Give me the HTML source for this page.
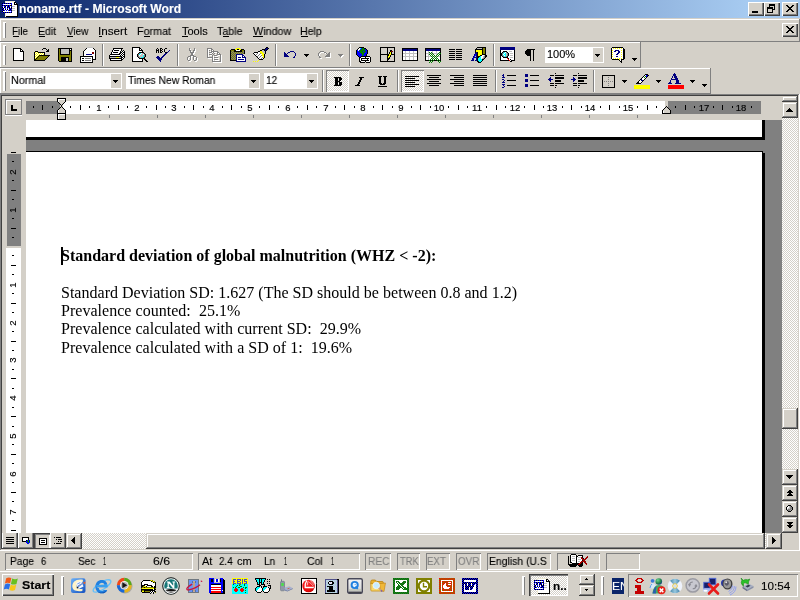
<!DOCTYPE html>
<html><head><meta charset="utf-8"><title>noname.rtf - Microsoft Word</title>
<style>
*{box-sizing:border-box;margin:0;padding:0}
html,body{width:800px;height:600px;overflow:hidden;background:#d4d0c8;font-family:"Liberation Sans",sans-serif;font-size:11px;color:#000}
.a{position:absolute}
.t{white-space:pre;line-height:14px;font-size:11px;will-change:transform;-webkit-text-stroke:0.12px currentColor}
.b{font-weight:bold}
.dz{background-image:conic-gradient(#fff 25%,#d4d0c8 0 50%,#fff 0 75%,#d4d0c8 0);background-size:2px 2px}
.doc{font-family:"Liberation Serif",serif;font-size:16px;line-height:18px;color:#000;-webkit-text-stroke:0}
.rn{font-size:9.5px;line-height:10px;width:20px;text-align:center;-webkit-text-stroke:0.15px #000}
.gt{color:#808080}
svg{overflow:visible}
</style></head>
<body>
<div class="a" style="left:0px;top:0px;width:800px;height:18px;background:linear-gradient(to right,#0a246a 0px,#a6caf0 746px);"></div>
<div class="a t b" style="left:19.0px;top:2px;color:#fff;font-size:12px;transform:scaleX(1.0101);transform-origin:0 0">noname.rtf - Microsoft Word</div>
<div class="a" style="left:748px;top:2px;width:16px;height:14px;background:#d4d0c8;box-shadow:inset 1px 1px 0 #fff,inset -1px -1px 0 #404040,inset -2px -2px 0 #808080"></div>
<div class="a" style="left:764px;top:2px;width:16px;height:14px;background:#d4d0c8;box-shadow:inset 1px 1px 0 #fff,inset -1px -1px 0 #404040,inset -2px -2px 0 #808080"></div>
<div class="a" style="left:782px;top:2px;width:16px;height:14px;background:#d4d0c8;box-shadow:inset 1px 1px 0 #fff,inset -1px -1px 0 #404040,inset -2px -2px 0 #808080"></div>
<div class="a" style="left:752px;top:11px;width:6px;height:2px;background:#000;"></div>
<div class="a" style="left:769px;top:4px;width:6px;height:2px;background:#000;"></div><div class="a" style="left:769px;top:6px;width:1px;height:2px;background:#000;"></div><div class="a" style="left:774px;top:6px;width:1px;height:4px;background:#000;"></div><div class="a" style="left:773px;top:9px;width:2px;height:1px;background:#000;"></div>
<div class="a" style="left:767px;top:7px;width:6px;height:2px;background:#000;"></div><div class="a" style="left:767px;top:9px;width:1px;height:4px;background:#000;"></div><div class="a" style="left:772px;top:9px;width:1px;height:4px;background:#000;"></div><div class="a" style="left:767px;top:12px;width:6px;height:1px;background:#000;"></div>
<svg class="a" style="left:786px;top:5px" width="8" height="7" viewBox="0 0 8 7" shape-rendering="crispEdges"><path fill="#000000" d="M0 0h2v1h-2zM6 0h2v1h-2zM1 1h2v1h-2zM5 1h2v1h-2zM2 2h4v1h-4zM3 3h2v1h-2zM2 4h4v1h-4zM1 5h2v1h-2zM5 5h2v1h-2zM0 6h2v1h-2zM6 6h2v1h-2z"/></svg>
<div class="a" style="left:0px;top:19px;width:799px;height:1px;background:#fff;"></div>
<div class="a" style="left:0px;top:19px;width:1px;height:22px;background:#fff;"></div>
<div class="a" style="left:799px;top:19px;width:1px;height:23px;background:#808080;"></div>
<div class="a" style="left:3px;top:22px;width:3px;height:16px;background:#d4d0c8;box-shadow:inset 2px 1px 0 #fff,inset -1px -1px 0 #808080"></div>
<div class="a t " style="left:12.0px;top:24px;;transform:scaleX(0.9019);transform-origin:0 0">File</div>
<div class="a t " style="left:38.0px;top:24px;;transform:scaleX(0.9553);transform-origin:0 0">Edit</div>
<div class="a t " style="left:67.0px;top:24px;;transform:scaleX(0.8987);transform-origin:0 0">View</div>
<div class="a t " style="left:98.0px;top:24px;;transform:scaleX(1.0611);transform-origin:0 0">Insert</div>
<div class="a t " style="left:137.0px;top:24px;;transform:scaleX(0.9764);transform-origin:0 0">Format</div>
<div class="a t " style="left:182.0px;top:24px;">Tools</div>
<div class="a t " style="left:217.0px;top:24px;;transform:scaleX(0.9691);transform-origin:0 0">Table</div>
<div class="a t " style="left:253.0px;top:24px;;transform:scaleX(0.9794);transform-origin:0 0">Window</div>
<div class="a t " style="left:300.0px;top:24px;;transform:scaleX(0.9617);transform-origin:0 0">Help</div>
<div class="a" style="left:13px;top:36px;width:6px;height:1px;background:#000;"></div>
<div class="a" style="left:39px;top:36px;width:6px;height:1px;background:#000;"></div>
<div class="a" style="left:67px;top:36px;width:6px;height:1px;background:#000;"></div>
<div class="a" style="left:99px;top:36px;width:3px;height:1px;background:#000;"></div>
<div class="a" style="left:144px;top:36px;width:6px;height:1px;background:#000;"></div>
<div class="a" style="left:182px;top:36px;width:6px;height:1px;background:#000;"></div>
<div class="a" style="left:223px;top:36px;width:6px;height:1px;background:#000;"></div>
<div class="a" style="left:253px;top:36px;width:10px;height:1px;background:#000;"></div>
<div class="a" style="left:301px;top:36px;width:7px;height:1px;background:#000;"></div>
<div class="a" style="left:782px;top:23px;width:16px;height:14px;background:#d4d0c8;box-shadow:inset 1px 1px 0 #fff,inset -1px -1px 0 #404040,inset -2px -2px 0 #808080"></div>
<svg class="a" style="left:786px;top:26px" width="8" height="7" viewBox="0 0 8 7" shape-rendering="crispEdges"><path fill="#000000" d="M0 0h2v1h-2zM6 0h2v1h-2zM1 1h2v1h-2zM5 1h2v1h-2zM2 2h4v1h-4zM3 3h2v1h-2zM2 4h4v1h-4zM1 5h2v1h-2zM5 5h2v1h-2zM0 6h2v1h-2zM6 6h2v1h-2z"/></svg>
<div class="a" style="left:0px;top:41px;width:800px;height:1px;background:#808080;"></div>
<div class="a" style="left:0px;top:42px;width:640px;height:1px;background:#fff;"></div>
<div class="a" style="left:0px;top:42px;width:1px;height:25px;background:#fff;"></div>
<div class="a" style="left:640px;top:42px;width:1px;height:26px;background:#808080;"></div>
<div class="a" style="left:0px;top:67px;width:641px;height:1px;background:#808080;"></div>
<div class="a" style="left:3px;top:45px;width:3px;height:20px;background:#d4d0c8;box-shadow:inset 2px 1px 0 #fff,inset -1px -1px 0 #808080"></div>
<div class="a" style="left:102px;top:44px;width:1px;height:22px;background:#808080;"></div>
<div class="a" style="left:103px;top:44px;width:1px;height:22px;background:#fff;"></div>
<div class="a" style="left:177px;top:44px;width:1px;height:22px;background:#808080;"></div>
<div class="a" style="left:178px;top:44px;width:1px;height:22px;background:#fff;"></div>
<div class="a" style="left:275px;top:44px;width:1px;height:22px;background:#808080;"></div>
<div class="a" style="left:276px;top:44px;width:1px;height:22px;background:#fff;"></div>
<div class="a" style="left:349px;top:44px;width:1px;height:22px;background:#808080;"></div>
<div class="a" style="left:350px;top:44px;width:1px;height:22px;background:#fff;"></div>
<div class="a" style="left:493px;top:44px;width:1px;height:22px;background:#808080;"></div>
<div class="a" style="left:494px;top:44px;width:1px;height:22px;background:#fff;"></div>
<div class="a" style="left:545px;top:47px;width:59px;height:16px;background:#fff;"></div>
<div class="a" style="left:593px;top:48px;width:10px;height:14px;background:#d4d0c8;"></div>
<div class="a" style="left:595px;top:54px;width:5px;height:1px;background:#000;"></div><div class="a" style="left:596px;top:55px;width:3px;height:1px;background:#000;"></div><div class="a" style="left:597px;top:56px;width:1px;height:1px;background:#000;"></div>
<div class="a t " style="left:547.0px;top:47px;;transform:scaleX(1.0011);transform-origin:0 0">100%</div>
<div class="a" style="left:632px;top:58px;width:5px;height:1px;background:#000;"></div><div class="a" style="left:633px;top:59px;width:3px;height:1px;background:#000;"></div><div class="a" style="left:634px;top:60px;width:1px;height:1px;background:#000;"></div>
<div class="a" style="left:304px;top:54px;width:5px;height:1px;background:#000;"></div><div class="a" style="left:305px;top:55px;width:3px;height:1px;background:#000;"></div><div class="a" style="left:306px;top:56px;width:1px;height:1px;background:#000;"></div>
<div class="a" style="left:339px;top:55px;width:5px;height:1px;background:#fff;"></div><div class="a" style="left:340px;top:56px;width:3px;height:1px;background:#fff;"></div><div class="a" style="left:341px;top:57px;width:1px;height:1px;background:#fff;"></div>
<div class="a" style="left:338px;top:54px;width:5px;height:1px;background:#808080;"></div><div class="a" style="left:339px;top:55px;width:3px;height:1px;background:#808080;"></div><div class="a" style="left:340px;top:56px;width:1px;height:1px;background:#808080;"></div>
<div class="a" style="left:0px;top:68px;width:710px;height:1px;background:#fff;"></div>
<div class="a" style="left:0px;top:68px;width:1px;height:25px;background:#fff;"></div>
<div class="a" style="left:710px;top:68px;width:1px;height:26px;background:#808080;"></div>
<div class="a" style="left:0px;top:93px;width:711px;height:1px;background:#808080;"></div>
<div class="a" style="left:3px;top:71px;width:3px;height:20px;background:#d4d0c8;box-shadow:inset 2px 1px 0 #fff,inset -1px -1px 0 #808080"></div>
<div class="a" style="left:10px;top:73px;width:112px;height:16px;background:#fff;"></div>
<div class="a" style="left:111px;top:74px;width:10px;height:14px;background:#d4d0c8;"></div>
<div class="a" style="left:113px;top:80px;width:5px;height:1px;background:#000;"></div><div class="a" style="left:114px;top:81px;width:3px;height:1px;background:#000;"></div><div class="a" style="left:115px;top:82px;width:1px;height:1px;background:#000;"></div>
<div class="a" style="left:126px;top:73px;width:134px;height:16px;background:#fff;"></div>
<div class="a" style="left:249px;top:74px;width:10px;height:14px;background:#d4d0c8;"></div>
<div class="a" style="left:251px;top:80px;width:5px;height:1px;background:#000;"></div><div class="a" style="left:252px;top:81px;width:3px;height:1px;background:#000;"></div><div class="a" style="left:253px;top:82px;width:1px;height:1px;background:#000;"></div>
<div class="a" style="left:264px;top:73px;width:54px;height:16px;background:#fff;"></div>
<div class="a" style="left:307px;top:74px;width:10px;height:14px;background:#d4d0c8;"></div>
<div class="a" style="left:309px;top:80px;width:5px;height:1px;background:#000;"></div><div class="a" style="left:310px;top:81px;width:3px;height:1px;background:#000;"></div><div class="a" style="left:311px;top:82px;width:1px;height:1px;background:#000;"></div>
<div class="a" style="left:322px;top:70px;width:1px;height:22px;background:#808080;"></div>
<div class="a" style="left:323px;top:70px;width:1px;height:22px;background:#fff;"></div>
<div class="a" style="left:397px;top:70px;width:1px;height:22px;background:#808080;"></div>
<div class="a" style="left:398px;top:70px;width:1px;height:22px;background:#fff;"></div>
<div class="a" style="left:495px;top:70px;width:1px;height:22px;background:#808080;"></div>
<div class="a" style="left:496px;top:70px;width:1px;height:22px;background:#fff;"></div>
<div class="a" style="left:593px;top:70px;width:1px;height:22px;background:#808080;"></div>
<div class="a" style="left:594px;top:70px;width:1px;height:22px;background:#fff;"></div>
<div class="a t " style="left:11.0px;top:73px;;transform:scaleX(0.9764);transform-origin:0 0">Normal</div>
<div class="a t " style="left:128.0px;top:73px;;transform:scaleX(0.938);transform-origin:0 0">Times New Roman</div>
<div class="a t " style="left:266.0px;top:73px;;transform:scaleX(0.9266);transform-origin:0 0">12</div>
<div class="a dz" style="left:326px;top:70px;width:23px;height:22px;box-shadow:inset 1px 1px 0 #808080,inset -1px -1px 0 #fff"></div>
<div class="a dz" style="left:401px;top:70px;width:23px;height:22px;box-shadow:inset 1px 1px 0 #808080,inset -1px -1px 0 #fff"></div>
<div class="a" style="left:622px;top:80px;width:5px;height:1px;background:#000;"></div><div class="a" style="left:623px;top:81px;width:3px;height:1px;background:#000;"></div><div class="a" style="left:624px;top:82px;width:1px;height:1px;background:#000;"></div>
<div class="a" style="left:656px;top:80px;width:5px;height:1px;background:#000;"></div><div class="a" style="left:657px;top:81px;width:3px;height:1px;background:#000;"></div><div class="a" style="left:658px;top:82px;width:1px;height:1px;background:#000;"></div>
<div class="a" style="left:690px;top:80px;width:5px;height:1px;background:#000;"></div><div class="a" style="left:691px;top:81px;width:3px;height:1px;background:#000;"></div><div class="a" style="left:692px;top:82px;width:1px;height:1px;background:#000;"></div>
<div class="a" style="left:702px;top:84px;width:5px;height:1px;background:#000;"></div><div class="a" style="left:703px;top:85px;width:3px;height:1px;background:#000;"></div><div class="a" style="left:704px;top:86px;width:1px;height:1px;background:#000;"></div>
<div class="a" style="left:634px;top:85px;width:16px;height:4px;background:#ffff00;"></div>
<div class="a" style="left:668px;top:85px;width:16px;height:4px;background:#ff0000;"></div>
<div class="a" style="left:0px;top:94px;width:800px;height:1px;background:#808080;"></div>
<div class="a" style="left:1px;top:95px;width:798px;height:1px;background:#404040;"></div>
<div class="a" style="left:0px;top:94px;width:1px;height:456px;background:#808080;"></div>
<div class="a" style="left:1px;top:95px;width:1px;height:454px;background:#404040;"></div>
<div class="a" style="left:798px;top:95px;width:1px;height:455px;background:#d4d0c8;"></div>
<div class="a" style="left:799px;top:94px;width:1px;height:457px;background:#fff;"></div>
<div class="a" style="left:1px;top:549px;width:798px;height:1px;background:#d4d0c8;"></div>
<div class="a" style="left:0px;top:550px;width:800px;height:1px;background:#fff;"></div>
<div class="a" style="left:5px;top:99px;width:17px;height:16px;background:#d4d0c8;box-shadow:inset 0 0 0 1px #808080,inset 2px 2px 0 0 #fff"></div>
<div class="a" style="left:5px;top:115px;width:17px;height:1px;background:#fff;"></div>
<div class="a" style="left:11px;top:105px;width:2px;height:6px;background:#000;"></div><div class="a" style="left:11px;top:109px;width:6px;height:2px;background:#000;"></div>
<div class="a" style="left:26px;top:101px;width:34px;height:13px;background:#808080;"></div>
<div class="a" style="left:63px;top:101px;width:602px;height:13px;background:#fff;"></div>
<div class="a" style="left:668px;top:101px;width:93px;height:13px;background:#808080;"></div>
<div class="a" style="left:33px;top:106px;width:1px;height:2px;background:#000;"></div>
<div class="a" style="left:42px;top:105px;width:1px;height:5px;background:#000;"></div>
<div class="a" style="left:52px;top:106px;width:1px;height:2px;background:#000;"></div>
<div class="a" style="left:70px;top:106px;width:1px;height:2px;background:#000;"></div>
<div class="a" style="left:80px;top:105px;width:1px;height:5px;background:#000;"></div>
<div class="a" style="left:89px;top:106px;width:1px;height:2px;background:#000;"></div>
<div class="a t rn" style="left:89px;top:103px;">1</div>
<div class="a" style="left:108px;top:106px;width:1px;height:2px;background:#000;"></div>
<div class="a" style="left:118px;top:105px;width:1px;height:5px;background:#000;"></div>
<div class="a" style="left:127px;top:106px;width:1px;height:2px;background:#000;"></div>
<div class="a t rn" style="left:127px;top:103px;">2</div>
<div class="a" style="left:146px;top:106px;width:1px;height:2px;background:#000;"></div>
<div class="a" style="left:156px;top:105px;width:1px;height:5px;background:#000;"></div>
<div class="a" style="left:165px;top:106px;width:1px;height:2px;background:#000;"></div>
<div class="a t rn" style="left:164px;top:103px;">3</div>
<div class="a" style="left:184px;top:106px;width:1px;height:2px;background:#000;"></div>
<div class="a" style="left:193px;top:105px;width:1px;height:5px;background:#000;"></div>
<div class="a" style="left:203px;top:106px;width:1px;height:2px;background:#000;"></div>
<div class="a t rn" style="left:202px;top:103px;">4</div>
<div class="a" style="left:222px;top:106px;width:1px;height:2px;background:#000;"></div>
<div class="a" style="left:231px;top:105px;width:1px;height:5px;background:#000;"></div>
<div class="a" style="left:241px;top:106px;width:1px;height:2px;background:#000;"></div>
<div class="a t rn" style="left:240px;top:103px;">5</div>
<div class="a" style="left:259px;top:106px;width:1px;height:2px;background:#000;"></div>
<div class="a" style="left:269px;top:105px;width:1px;height:5px;background:#000;"></div>
<div class="a" style="left:278px;top:106px;width:1px;height:2px;background:#000;"></div>
<div class="a t rn" style="left:278px;top:103px;">6</div>
<div class="a" style="left:297px;top:106px;width:1px;height:2px;background:#000;"></div>
<div class="a" style="left:307px;top:105px;width:1px;height:5px;background:#000;"></div>
<div class="a" style="left:316px;top:106px;width:1px;height:2px;background:#000;"></div>
<div class="a t rn" style="left:316px;top:103px;">7</div>
<div class="a" style="left:335px;top:106px;width:1px;height:2px;background:#000;"></div>
<div class="a" style="left:344px;top:105px;width:1px;height:5px;background:#000;"></div>
<div class="a" style="left:354px;top:106px;width:1px;height:2px;background:#000;"></div>
<div class="a t rn" style="left:353px;top:103px;">8</div>
<div class="a" style="left:373px;top:106px;width:1px;height:2px;background:#000;"></div>
<div class="a" style="left:382px;top:105px;width:1px;height:5px;background:#000;"></div>
<div class="a" style="left:392px;top:106px;width:1px;height:2px;background:#000;"></div>
<div class="a t rn" style="left:391px;top:103px;">9</div>
<div class="a" style="left:411px;top:106px;width:1px;height:2px;background:#000;"></div>
<div class="a" style="left:420px;top:105px;width:1px;height:5px;background:#000;"></div>
<div class="a" style="left:430px;top:106px;width:1px;height:2px;background:#000;"></div>
<div class="a t rn" style="left:429px;top:103px;">10</div>
<div class="a" style="left:448px;top:106px;width:1px;height:2px;background:#000;"></div>
<div class="a" style="left:458px;top:105px;width:1px;height:5px;background:#000;"></div>
<div class="a" style="left:467px;top:106px;width:1px;height:2px;background:#000;"></div>
<div class="a t rn" style="left:467px;top:103px;">11</div>
<div class="a" style="left:486px;top:106px;width:1px;height:2px;background:#000;"></div>
<div class="a" style="left:496px;top:105px;width:1px;height:5px;background:#000;"></div>
<div class="a" style="left:505px;top:106px;width:1px;height:2px;background:#000;"></div>
<div class="a t rn" style="left:505px;top:103px;">12</div>
<div class="a" style="left:524px;top:106px;width:1px;height:2px;background:#000;"></div>
<div class="a" style="left:534px;top:105px;width:1px;height:5px;background:#000;"></div>
<div class="a" style="left:543px;top:106px;width:1px;height:2px;background:#000;"></div>
<div class="a t rn" style="left:542px;top:103px;">13</div>
<div class="a" style="left:562px;top:106px;width:1px;height:2px;background:#000;"></div>
<div class="a" style="left:571px;top:105px;width:1px;height:5px;background:#000;"></div>
<div class="a" style="left:581px;top:106px;width:1px;height:2px;background:#000;"></div>
<div class="a t rn" style="left:580px;top:103px;">14</div>
<div class="a" style="left:600px;top:106px;width:1px;height:2px;background:#000;"></div>
<div class="a" style="left:609px;top:105px;width:1px;height:5px;background:#000;"></div>
<div class="a" style="left:619px;top:106px;width:1px;height:2px;background:#000;"></div>
<div class="a t rn" style="left:618px;top:103px;">15</div>
<div class="a" style="left:637px;top:106px;width:1px;height:2px;background:#000;"></div>
<div class="a" style="left:647px;top:105px;width:1px;height:5px;background:#000;"></div>
<div class="a" style="left:656px;top:106px;width:1px;height:2px;background:#000;"></div>
<div class="a" style="left:675px;top:106px;width:1px;height:2px;background:#000;"></div>
<div class="a" style="left:685px;top:105px;width:1px;height:5px;background:#000;"></div>
<div class="a" style="left:694px;top:106px;width:1px;height:2px;background:#000;"></div>
<div class="a t rn" style="left:694px;top:103px;">17</div>
<div class="a" style="left:713px;top:106px;width:1px;height:2px;background:#000;"></div>
<div class="a" style="left:722px;top:105px;width:1px;height:5px;background:#000;"></div>
<div class="a" style="left:732px;top:106px;width:1px;height:2px;background:#000;"></div>
<div class="a t rn" style="left:731px;top:103px;">18</div>
<div class="a" style="left:751px;top:106px;width:1px;height:2px;background:#000;"></div>
<div class="a" style="left:109px;top:115px;width:1px;height:3px;background:#808080;"></div>
<div class="a" style="left:157px;top:115px;width:1px;height:3px;background:#808080;"></div>
<div class="a" style="left:205px;top:115px;width:1px;height:3px;background:#808080;"></div>
<div class="a" style="left:253px;top:115px;width:1px;height:3px;background:#808080;"></div>
<div class="a" style="left:301px;top:115px;width:1px;height:3px;background:#808080;"></div>
<div class="a" style="left:349px;top:115px;width:1px;height:3px;background:#808080;"></div>
<div class="a" style="left:397px;top:115px;width:1px;height:3px;background:#808080;"></div>
<div class="a" style="left:445px;top:115px;width:1px;height:3px;background:#808080;"></div>
<div class="a" style="left:493px;top:115px;width:1px;height:3px;background:#808080;"></div>
<div class="a" style="left:541px;top:115px;width:1px;height:3px;background:#808080;"></div>
<div class="a" style="left:589px;top:115px;width:1px;height:3px;background:#808080;"></div>
<div class="a" style="left:637px;top:115px;width:1px;height:3px;background:#808080;"></div>
<svg class="a" style="left:57px;top:98px" width="9" height="22" viewBox="0 0 9 22" shape-rendering="crispEdges"><path d="M0.5 0.5H8.5V3.5L4.5 7.5L0.5 3.5Z" fill="#d4d0c8" stroke="#000"/><path d="M4.5 8.5L8.5 12.5V15.5H0.5V12.5Z" fill="#d4d0c8" stroke="#000"/><path d="M0.5 15.5H8.5V21.5H0.5Z" fill="#d4d0c8" stroke="#000"/><path d="M1 1h7v1h-6v2h-1zM1 16h7v1h-6v4h-1zM1 12h1v3h-1z" fill="#fff"/></svg>
<svg class="a" style="left:662px;top:106px" width="9" height="8" viewBox="0 0 9 8" shape-rendering="crispEdges"><path d="M4.5 0.5L8.5 4.5V7.5H0.5V4.5Z" fill="#d4d0c8" stroke="#000"/><path d="M1 5h1v2h-1z" fill="#fff"/></svg>
<div class="a" style="left:7px;top:154px;width:14px;height:92px;background:#808080;"></div>
<div class="a" style="left:6px;top:248px;width:15px;height:285px;background:#fff;"></div>
<div class="a" style="left:11px;top:152px;width:5px;height:1px;background:#000;"></div>
<div class="a" style="left:12px;top:161px;width:2px;height:1px;background:#000;"></div>
<div class="a t rn" style="left:3px;top:167px;transform:rotate(-90deg);transform-origin:10px 5px">2</div>
<div class="a" style="left:12px;top:180px;width:2px;height:1px;background:#000;"></div>
<div class="a" style="left:11px;top:190px;width:5px;height:1px;background:#000;"></div>
<div class="a" style="left:12px;top:199px;width:2px;height:1px;background:#000;"></div>
<div class="a t rn" style="left:3px;top:205px;transform:rotate(-90deg);transform-origin:10px 5px">1</div>
<div class="a" style="left:12px;top:218px;width:2px;height:1px;background:#000;"></div>
<div class="a" style="left:11px;top:228px;width:5px;height:1px;background:#000;"></div>
<div class="a" style="left:12px;top:237px;width:2px;height:1px;background:#000;"></div>
<div class="a" style="left:12px;top:255px;width:2px;height:1px;background:#000;"></div>
<div class="a" style="left:11px;top:265px;width:5px;height:1px;background:#000;"></div>
<div class="a" style="left:12px;top:274px;width:2px;height:1px;background:#000;"></div>
<div class="a t rn" style="left:3px;top:280px;transform:rotate(-90deg);transform-origin:10px 5px">1</div>
<div class="a" style="left:12px;top:293px;width:2px;height:1px;background:#000;"></div>
<div class="a" style="left:11px;top:303px;width:5px;height:1px;background:#000;"></div>
<div class="a" style="left:12px;top:312px;width:2px;height:1px;background:#000;"></div>
<div class="a t rn" style="left:3px;top:318px;transform:rotate(-90deg);transform-origin:10px 5px">2</div>
<div class="a" style="left:12px;top:331px;width:2px;height:1px;background:#000;"></div>
<div class="a" style="left:11px;top:341px;width:5px;height:1px;background:#000;"></div>
<div class="a" style="left:12px;top:350px;width:2px;height:1px;background:#000;"></div>
<div class="a t rn" style="left:3px;top:355px;transform:rotate(-90deg);transform-origin:10px 5px">3</div>
<div class="a" style="left:12px;top:369px;width:2px;height:1px;background:#000;"></div>
<div class="a" style="left:11px;top:378px;width:5px;height:1px;background:#000;"></div>
<div class="a" style="left:12px;top:388px;width:2px;height:1px;background:#000;"></div>
<div class="a t rn" style="left:3px;top:393px;transform:rotate(-90deg);transform-origin:10px 5px">4</div>
<div class="a" style="left:12px;top:407px;width:2px;height:1px;background:#000;"></div>
<div class="a" style="left:11px;top:416px;width:5px;height:1px;background:#000;"></div>
<div class="a" style="left:12px;top:426px;width:2px;height:1px;background:#000;"></div>
<div class="a t rn" style="left:3px;top:431px;transform:rotate(-90deg);transform-origin:10px 5px">5</div>
<div class="a" style="left:12px;top:444px;width:2px;height:1px;background:#000;"></div>
<div class="a" style="left:11px;top:454px;width:5px;height:1px;background:#000;"></div>
<div class="a" style="left:12px;top:463px;width:2px;height:1px;background:#000;"></div>
<div class="a t rn" style="left:3px;top:469px;transform:rotate(-90deg);transform-origin:10px 5px">6</div>
<div class="a" style="left:12px;top:482px;width:2px;height:1px;background:#000;"></div>
<div class="a" style="left:11px;top:492px;width:5px;height:1px;background:#000;"></div>
<div class="a" style="left:12px;top:501px;width:2px;height:1px;background:#000;"></div>
<div class="a t rn" style="left:3px;top:507px;transform:rotate(-90deg);transform-origin:10px 5px">7</div>
<div class="a" style="left:12px;top:520px;width:2px;height:1px;background:#000;"></div>
<div class="a" style="left:11px;top:530px;width:5px;height:1px;background:#000;"></div>
<div class="a" style="left:26px;top:120px;width:756px;height:413px;background:#808080;"></div>
<div class="a" style="left:26px;top:120px;width:736px;height:17px;background:#fff;"></div>
<div class="a" style="left:762px;top:120px;width:3px;height:20px;background:#000;"></div>
<div class="a" style="left:26px;top:137px;width:739px;height:3px;background:#000;"></div>
<div class="a" style="left:26px;top:151px;width:737px;height:1px;background:#000;"></div>
<div class="a" style="left:762px;top:153px;width:3px;height:380px;background:#000;"></div>
<div class="a" style="left:762px;top:152px;width:1px;height:1px;background:#000;"></div>
<div class="a" style="left:26px;top:152px;width:736px;height:381px;background:#fff;"></div>
<div class="a" style="left:61px;top:247px;width:2px;height:18px;background:#000;"></div>
<div class="a t doc b" style="left:61px;top:247px;letter-spacing:0.008px">Standard deviation of global malnutrition (WHZ &lt; -2):</div>
<div class="a t doc" style="left:61px;top:284px;letter-spacing:0.015px">Standard Deviation SD: 1.627 (The SD should be between 0.8 and 1.2)</div>
<div class="a t doc" style="left:61px;top:302px;letter-spacing:0.03px">Prevalence counted:  25.1%</div>
<div class="a t doc" style="left:61px;top:320px;letter-spacing:0.025px">Prevalence calculated with current SD:  29.9%</div>
<div class="a t doc" style="left:61px;top:339px;letter-spacing:0.025px">Prevalence calculated with a SD of 1:  19.6%</div>
<div class="a dz" style="left:782px;top:96px;width:16px;height:437px"></div>
<div class="a" style="left:782px;top:96px;width:16px;height:6px;background:#d4d0c8;box-shadow:inset -1px -1px 0 #404040,inset 1px 1px 0 #d4d0c8,inset -2px -2px 0 #808080,inset 2px 2px 0 #fff"></div>
<div class="a" style="left:782px;top:102px;width:16px;height:16px;background:#d4d0c8;box-shadow:inset -1px -1px 0 #404040,inset 1px 1px 0 #d4d0c8,inset -2px -2px 0 #808080,inset 2px 2px 0 #fff"></div>
<div class="a" style="left:789px;top:108px;width:1px;height:1px;background:#000;"></div><div class="a" style="left:788px;top:109px;width:3px;height:1px;background:#000;"></div><div class="a" style="left:787px;top:110px;width:5px;height:1px;background:#000;"></div><div class="a" style="left:786px;top:111px;width:7px;height:1px;background:#000;"></div>
<div class="a" style="left:782px;top:408px;width:16px;height:21px;background:#d4d0c8;box-shadow:inset -1px -1px 0 #404040,inset 1px 1px 0 #d4d0c8,inset -2px -2px 0 #808080,inset 2px 2px 0 #fff"></div>
<div class="a" style="left:782px;top:469px;width:16px;height:16px;background:#d4d0c8;box-shadow:inset -1px -1px 0 #404040,inset 1px 1px 0 #d4d0c8,inset -2px -2px 0 #808080,inset 2px 2px 0 #fff"></div>
<div class="a" style="left:782px;top:485px;width:16px;height:16px;background:#d4d0c8;box-shadow:inset -1px -1px 0 #404040,inset 1px 1px 0 #d4d0c8,inset -2px -2px 0 #808080,inset 2px 2px 0 #fff"></div>
<div class="a" style="left:782px;top:501px;width:16px;height:16px;background:#d4d0c8;box-shadow:inset -1px -1px 0 #404040,inset 1px 1px 0 #d4d0c8,inset -2px -2px 0 #808080,inset 2px 2px 0 #fff"></div>
<div class="a" style="left:782px;top:517px;width:16px;height:16px;background:#d4d0c8;box-shadow:inset -1px -1px 0 #404040,inset 1px 1px 0 #d4d0c8,inset -2px -2px 0 #808080,inset 2px 2px 0 #fff"></div>
<div class="a" style="left:786px;top:475px;width:7px;height:1px;background:#000;"></div><div class="a" style="left:787px;top:476px;width:5px;height:1px;background:#000;"></div><div class="a" style="left:788px;top:477px;width:3px;height:1px;background:#000;"></div><div class="a" style="left:789px;top:478px;width:1px;height:1px;background:#000;"></div>
<div class="a dz" style="left:66px;top:533px;width:716px;height:16px"></div>
<div class="a" style="left:2px;top:533px;width:64px;height:16px;background:#d4d0c8;"></div>
<div class="a" style="left:782px;top:533px;width:16px;height:16px;background:#d4d0c8;"></div>
<div class="a" style="left:66px;top:533px;width:16px;height:16px;background:#d4d0c8;box-shadow:inset -1px -1px 0 #404040,inset 1px 1px 0 #d4d0c8,inset -2px -2px 0 #808080,inset 2px 2px 0 #fff"></div>
<div class="a" style="left:74px;top:537px;width:1px;height:7px;background:#000;"></div><div class="a" style="left:73px;top:538px;width:1px;height:5px;background:#000;"></div><div class="a" style="left:72px;top:539px;width:1px;height:3px;background:#000;"></div><div class="a" style="left:71px;top:540px;width:1px;height:1px;background:#000;"></div>
<div class="a" style="left:766px;top:533px;width:16px;height:16px;background:#d4d0c8;box-shadow:inset -1px -1px 0 #404040,inset 1px 1px 0 #d4d0c8,inset -2px -2px 0 #808080,inset 2px 2px 0 #fff"></div>
<div class="a" style="left:772px;top:537px;width:1px;height:7px;background:#000;"></div><div class="a" style="left:773px;top:538px;width:1px;height:5px;background:#000;"></div><div class="a" style="left:774px;top:539px;width:1px;height:3px;background:#000;"></div><div class="a" style="left:775px;top:540px;width:1px;height:1px;background:#000;"></div>
<div class="a" style="left:146px;top:533px;width:619px;height:16px;background:#d4d0c8;box-shadow:inset -1px -1px 0 #404040,inset 1px 1px 0 #d4d0c8,inset -2px -2px 0 #808080,inset 2px 2px 0 #fff"></div>
<div class="a" style="left:2px;top:533px;width:16px;height:16px;background:#d4d0c8;box-shadow:inset 1px 0 0 #fff,inset -1px -1px 0 #404040,inset -2px -2px 0 #808080"></div>
<div class="a" style="left:18px;top:533px;width:16px;height:16px;background:#d4d0c8;box-shadow:inset 1px 0 0 #fff,inset -1px -1px 0 #404040,inset -2px -2px 0 #808080"></div>
<div class="a" style="left:34px;top:533px;width:16px;height:16px;background:#d4d0c8;box-shadow:inset 1px 1px 0 #404040,inset 2px 2px 0 #808080,inset -1px -1px 0 #fff"></div>
<div class="a" style="left:50px;top:533px;width:16px;height:16px;background:#d4d0c8;box-shadow:inset 1px 0 0 #fff,inset -1px -1px 0 #404040,inset -2px -2px 0 #808080"></div>
<div class="a" style="left:2px;top:548px;width:64px;height:1px;background:#404040;"></div>
<div class="a" style="left:6px;top:537px;width:8px;height:1px;background:#000;"></div>
<div class="a" style="left:6px;top:539px;width:8px;height:1px;background:#000;"></div>
<div class="a" style="left:6px;top:541px;width:8px;height:1px;background:#000;"></div>
<div class="a" style="left:6px;top:543px;width:8px;height:1px;background:#000;"></div>
<svg class="a" style="left:22px;top:537px" width="8" height="7" viewBox="0 0 8 7" shape-rendering="crispEdges"><path fill="#000000" d="M0 0h7v1h-7zM0 1h1v1h-1zM6 1h1v1h-1zM0 2h1v1h-1zM6 2h1v1h-1zM0 3h1v1h-1zM4 3h1v1h-1zM0 4h4v1h-4z"/><path fill="#ffffff" d="M1 1h5v1h-5zM1 2h5v1h-5zM1 3h3v1h-3z"/><path fill="#0000ff" d="M5 3h1v1h-1zM7 3h1v1h-1zM4 4h1v1h-1zM7 4h1v1h-1zM4 5h2v1h-2zM7 5h1v1h-1zM5 6h2v1h-2z"/><path fill="#008000" d="M6 3h1v1h-1zM5 4h2v1h-2zM6 5h1v1h-1z"/></svg>
<svg class="a" style="left:39px;top:538px" width="8" height="7" viewBox="0 0 8 7" shape-rendering="crispEdges"><path fill="#000000" d="M0 0h8v1h-8zM0 1h1v1h-1zM7 1h1v1h-1zM0 2h1v1h-1zM2 2h4v1h-4zM7 2h1v1h-1zM0 3h1v1h-1zM7 3h1v1h-1zM0 4h1v1h-1zM2 4h4v1h-4zM7 4h1v1h-1zM0 5h1v1h-1zM7 5h1v1h-1zM0 6h8v1h-8z"/><path fill="#ffffff" d="M1 1h6v1h-6zM1 2h1v1h-1zM6 2h1v1h-1zM1 3h6v1h-6zM1 4h1v1h-1zM6 4h1v1h-1zM1 5h6v1h-6z"/></svg>
<svg class="a" style="left:54px;top:537px" width="8" height="7" viewBox="0 0 8 7" shape-rendering="crispEdges"><path fill="#000000" d="M0 0h1v1h-1zM2 0h5v1h-5zM2 2h1v1h-1zM4 2h4v1h-4zM4 4h1v1h-1zM6 4h2v1h-2zM0 6h1v1h-1zM2 6h5v1h-5z"/></svg>
<svg class="a" style="left:787px;top:490px" width="6" height="6" viewBox="0 0 6 6" shape-rendering="crispEdges"><path fill="#000000" d="M2 0h2v1h-2zM1 1h4v1h-4zM0 2h6v1h-6zM2 3h2v1h-2zM1 4h4v1h-4zM0 5h6v1h-6z"/></svg>
<svg class="a" style="left:787px;top:522px" width="6" height="6" viewBox="0 0 6 6" shape-rendering="crispEdges"><path fill="#000000" d="M0 0h6v1h-6zM1 1h4v1h-4zM2 2h2v1h-2zM0 3h6v1h-6zM1 4h4v1h-4zM2 5h2v1h-2z"/></svg>
<svg class="a" style="left:786px;top:505px" width="7" height="7" viewBox="0 0 7 7" shape-rendering="crispEdges"><path fill="#000000" d="M2 0h3v1h-3zM1 1h1v1h-1zM5 1h1v1h-1zM0 2h1v1h-1zM6 2h1v1h-1zM0 3h1v1h-1zM6 3h1v1h-1zM0 4h1v1h-1zM6 4h1v1h-1zM1 5h1v1h-1zM5 5h1v1h-1zM2 6h3v1h-3z"/><path fill="#ffffff" d="M2 1h1v1h-1zM1 2h2v1h-2zM1 3h1v1h-1z"/><path fill="#c0c0c0" d="M3 1h1v1h-1zM3 2h1v1h-1zM2 3h2v1h-2zM1 4h1v1h-1z"/><path fill="#808080" d="M4 1h1v1h-1zM4 2h2v1h-2zM4 3h2v1h-2zM2 4h3v1h-3zM2 5h2v1h-2z"/><path fill="#a0a0a0" d="M5 4h1v1h-1zM4 5h1v1h-1z"/></svg>
<div class="a" style="left:5px;top:553px;width:188px;height:17px;background:#d4d0c8;box-shadow:inset 1px 1px 0 #808080,inset -1px -1px 0 #fff"></div>
<div class="a" style="left:198px;top:553px;width:162px;height:17px;background:#d4d0c8;box-shadow:inset 1px 1px 0 #808080,inset -1px -1px 0 #fff"></div>
<div class="a" style="left:365px;top:553px;width:26px;height:17px;background:#d4d0c8;box-shadow:inset 1px 1px 0 #808080,inset -1px -1px 0 #fff"></div>
<div class="a" style="left:397px;top:553px;width:23px;height:17px;background:#d4d0c8;box-shadow:inset 1px 1px 0 #808080,inset -1px -1px 0 #fff"></div>
<div class="a" style="left:426px;top:553px;width:24px;height:17px;background:#d4d0c8;box-shadow:inset 1px 1px 0 #808080,inset -1px -1px 0 #fff"></div>
<div class="a" style="left:456px;top:553px;width:25px;height:17px;background:#d4d0c8;box-shadow:inset 1px 1px 0 #808080,inset -1px -1px 0 #fff"></div>
<div class="a" style="left:487px;top:553px;width:64px;height:17px;background:#d4d0c8;box-shadow:inset 1px 1px 0 #808080,inset -1px -1px 0 #fff"></div>
<div class="a" style="left:557px;top:553px;width:43px;height:17px;background:#d4d0c8;box-shadow:inset 1px 1px 0 #808080,inset -1px -1px 0 #fff"></div>
<div class="a" style="left:606px;top:553px;width:34px;height:17px;background:#d4d0c8;box-shadow:inset 1px 1px 0 #808080,inset -1px -1px 0 #fff"></div>
<div class="a t " style="left:10.0px;top:554px;;transform:scaleX(0.9341);transform-origin:0 0">Page</div>
<div class="a t " style="left:41.0px;top:554px;;transform:scaleX(0.8643);transform-origin:0 0">6</div>
<div class="a t " style="left:78.0px;top:554px;;transform:scaleX(0.9129);transform-origin:0 0">Sec</div>
<div class="a t " style="left:103.0px;top:554px;;transform:scaleX(0.5014);transform-origin:0 0">1</div>
<div class="a t " style="left:153.0px;top:554px;;transform:scaleX(1.1162);transform-origin:0 0">6/6</div>
<div class="a t " style="left:202.0px;top:554px;">At</div>
<div class="a t " style="left:219.0px;top:554px;;transform:scaleX(0.8955);transform-origin:0 0">2.4</div>
<div class="a t " style="left:237.0px;top:554px;;transform:scaleX(1.0041);transform-origin:0 0">cm</div>
<div class="a t " style="left:264.0px;top:554px;;transform:scaleX(0.9266);transform-origin:0 0">Ln</div>
<div class="a t " style="left:284.0px;top:554px;;transform:scaleX(0.5014);transform-origin:0 0">1</div>
<div class="a t " style="left:307.0px;top:554px;;transform:scaleX(0.9502);transform-origin:0 0">Col</div>
<div class="a t " style="left:331.0px;top:554px;;transform:scaleX(0.5014);transform-origin:0 0">1</div>
<div class="a t gt" style="left:368.0px;top:554px;;transform:scaleX(0.9249);transform-origin:0 0">REC</div>
<div class="a t gt" style="left:400.0px;top:554px;;transform:scaleX(0.843);transform-origin:0 0">TRK</div>
<div class="a t gt" style="left:427.0px;top:554px;;transform:scaleX(0.8784);transform-origin:0 0">EXT</div>
<div class="a t gt" style="left:458.0px;top:554px;;transform:scaleX(0.8958);transform-origin:0 0">OVR</div>
<div class="a t " style="left:489.0px;top:554px;;transform:scaleX(0.9454);transform-origin:0 0">English (U.S</div>
<div class="a" style="left:0px;top:571px;width:800px;height:1px;background:#fff;"></div>
<div class="a" style="left:2px;top:574px;width:52px;height:22px;background:#d4d0c8;box-shadow:inset 1px 1px 0 #fff,inset -1px -1px 0 #404040,inset -2px -2px 0 #808080"></div>
<div class="a t b" style="left:22.0px;top:578px;;transform:scaleX(1.1284);transform-origin:0 0">Start</div>
<div class="a" style="left:61px;top:576px;width:3px;height:19px;background:#d4d0c8;box-shadow:inset 2px 1px 0 #fff,inset -1px -1px 0 #808080"></div>
<div class="a" style="left:522px;top:576px;width:3px;height:19px;background:#d4d0c8;box-shadow:inset 2px 1px 0 #fff,inset -1px -1px 0 #808080"></div>
<div class="a" style="left:601px;top:576px;width:3px;height:19px;background:#d4d0c8;box-shadow:inset 2px 1px 0 #fff,inset -1px -1px 0 #808080"></div>
<div class="a dz" style="left:529px;top:574px;width:39px;height:22px;box-shadow:inset 1px 1px 0 #404040,inset 2px 2px 0 #808080,inset -1px -1px 0 #fff"></div>
<div class="a t b" style="left:553.0px;top:579px;;transform:scaleX(1.0721);transform-origin:0 0">n..</div>
<div class="a" style="left:579px;top:574px;width:16px;height:11px;background:#d4d0c8;box-shadow:inset -1px -1px 0 #404040,inset 1px 1px 0 #d4d0c8,inset -2px -2px 0 #808080,inset 2px 2px 0 #fff"></div>
<div class="a" style="left:579px;top:585px;width:16px;height:11px;background:#d4d0c8;box-shadow:inset -1px -1px 0 #404040,inset 1px 1px 0 #d4d0c8,inset -2px -2px 0 #808080,inset 2px 2px 0 #fff"></div>
<div class="a" style="left:586px;top:578px;width:1px;height:1px;background:#000;"></div><div class="a" style="left:585px;top:579px;width:3px;height:1px;background:#000;"></div>
<div class="a" style="left:585px;top:589px;width:3px;height:1px;background:#000;"></div><div class="a" style="left:586px;top:590px;width:1px;height:1px;background:#000;"></div>
<div class="a" style="left:612px;top:578px;width:12px;height:16px;background:#0a246a;"></div>
<div class="a t " style="left:612.0px;top:579px;color:#fff;width:11px;overflow:hidden;transform:scaleX(1.0792);transform-origin:0 0">EN</div>
<div class="a" style="left:628px;top:574px;width:170px;height:23px;background:#d4d0c8;box-shadow:inset 1px 1px 0 #808080,inset -1px -1px 0 #fff"></div>
<div class="a t " style="left:761.0px;top:579px;;transform:scaleX(1.0611);transform-origin:0 0">10:54</div>
<svg class="a" style="left:1px;top:1px" width="18" height="16" viewBox="0 0 18 16" shape-rendering="crispEdges"><path fill="#f0ecd8" d="M4 0h10v1h-10zM4 1h1v1h-1zM4 12h1v1h-1zM4 13h1v1h-1zM4 14h1v1h-1zM4 15h1v1h-1z"/><path fill="#ffffff" d="M5 1h8v1h-8zM11 2h2v1h-2zM14 2h1v1h-1zM2 3h8v1h-8zM11 3h2v1h-2zM11 4h5v1h-5zM2 5h1v1h-1zM5 5h1v1h-1zM9 5h1v1h-1zM14 5h2v1h-2zM2 6h1v1h-1zM5 6h1v1h-1zM9 6h1v1h-1zM11 6h5v1h-5zM3 7h1v1h-1zM5 7h1v1h-1zM7 7h1v1h-1zM14 7h2v1h-2zM3 8h1v1h-1zM5 8h1v1h-1zM7 8h1v1h-1zM11 8h5v1h-5zM4 9h1v1h-1zM6 9h1v1h-1zM14 9h2v1h-2zM2 10h8v1h-8zM11 10h5v1h-5zM11 11h5v1h-5zM5 12h11v1h-11zM5 13h11v1h-11zM5 14h11v1h-11z"/><path fill="#000000" d="M13 1h2v1h-2zM1 2h1v1h-1zM3 2h1v1h-1zM5 2h1v1h-1zM7 2h1v1h-1zM9 2h1v1h-1zM13 2h1v1h-1zM15 2h1v1h-1zM13 3h4v1h-4zM1 4h1v1h-1zM3 4h1v1h-1zM5 4h1v1h-1zM7 4h1v1h-1zM9 4h2v1h-2zM16 4h1v1h-1zM4 5h1v1h-1zM7 5h1v1h-1zM16 5h1v1h-1zM1 6h1v1h-1zM3 6h1v1h-1zM6 6h1v1h-1zM8 6h1v1h-1zM10 6h1v1h-1zM16 6h1v1h-1zM2 7h1v1h-1zM8 7h1v1h-1zM10 7h1v1h-1zM16 7h1v1h-1zM1 8h1v1h-1zM4 8h1v1h-1zM6 8h1v1h-1zM9 8h1v1h-1zM16 8h1v1h-1zM2 9h1v1h-1zM8 9h1v1h-1zM10 9h1v1h-1zM16 9h1v1h-1zM1 10h1v1h-1zM16 10h1v1h-1zM2 11h1v1h-1zM4 11h1v1h-1zM6 11h1v1h-1zM8 11h1v1h-1zM10 11h1v1h-1zM16 11h1v1h-1zM16 12h1v1h-1zM16 13h1v1h-1zM16 14h1v1h-1zM5 15h12v1h-12z"/><path fill="#0000ff" d="M2 2h1v1h-1zM4 2h1v1h-1zM6 2h1v1h-1zM8 2h1v1h-1zM10 2h1v1h-1zM1 3h1v1h-1zM10 3h1v1h-1zM2 4h1v1h-1zM4 4h1v1h-1zM6 4h1v1h-1zM8 4h1v1h-1zM1 5h1v1h-1zM3 5h1v1h-1zM6 5h1v1h-1zM8 5h1v1h-1zM10 5h1v1h-1zM4 6h1v1h-1zM7 6h1v1h-1zM1 7h1v1h-1zM4 7h1v1h-1zM6 7h1v1h-1zM9 7h1v1h-1zM2 8h1v1h-1zM8 8h1v1h-1zM10 8h1v1h-1zM1 9h1v1h-1zM3 9h1v1h-1zM5 9h1v1h-1zM7 9h1v1h-1zM9 9h1v1h-1zM10 10h1v1h-1zM1 11h1v1h-1zM3 11h1v1h-1zM5 11h1v1h-1zM7 11h1v1h-1zM9 11h1v1h-1z"/><path fill="#c0c0c0" d="M11 5h3v1h-3zM11 7h3v1h-3zM11 9h3v1h-3z"/></svg>
<svg class="a" style="left:13px;top:48px" width="11" height="13" viewBox="0 0 11 13" shape-rendering="crispEdges"><path fill="#000000" d="M0 0h8v1h-8zM0 1h1v1h-1zM7 1h2v1h-2zM0 2h1v1h-1zM7 2h1v1h-1zM9 2h1v1h-1zM0 3h1v1h-1zM7 3h4v1h-4zM0 4h1v1h-1zM10 4h1v1h-1zM0 5h1v1h-1zM10 5h1v1h-1zM0 6h1v1h-1zM10 6h1v1h-1zM0 7h1v1h-1zM10 7h1v1h-1zM0 8h1v1h-1zM10 8h1v1h-1zM0 9h1v1h-1zM10 9h1v1h-1zM0 10h1v1h-1zM10 10h1v1h-1zM0 11h1v1h-1zM10 11h1v1h-1zM0 12h11v1h-11z"/><path fill="#ffffff" d="M1 1h6v1h-6zM1 2h6v1h-6zM8 2h1v1h-1zM1 3h6v1h-6zM1 4h9v1h-9zM1 5h9v1h-9zM1 6h9v1h-9zM1 7h9v1h-9zM1 8h9v1h-9zM1 9h9v1h-9zM1 10h9v1h-9zM1 11h9v1h-9z"/></svg>
<svg class="a" style="left:34px;top:48px" width="16" height="13" viewBox="0 0 16 13" shape-rendering="crispEdges"><path fill="#000000" d="M9 0h3v1h-3zM8 1h1v1h-1zM12 1h1v1h-1zM14 1h1v1h-1zM13 2h2v1h-2zM1 3h3v1h-3zM12 3h3v1h-3zM0 4h1v1h-1zM4 4h7v1h-7zM0 5h1v1h-1zM10 5h1v1h-1zM0 6h1v1h-1zM10 6h1v1h-1zM0 7h1v1h-1zM5 7h11v1h-11zM0 8h1v1h-1zM4 8h1v1h-1zM14 8h1v1h-1zM0 9h1v1h-1zM3 9h1v1h-1zM13 9h1v1h-1zM0 10h1v1h-1zM2 10h1v1h-1zM12 10h1v1h-1zM0 11h2v1h-2zM11 11h1v1h-1zM0 12h11v1h-11z"/><path fill="#ffff00" d="M1 4h1v1h-1zM3 4h1v1h-1zM2 5h1v1h-1zM4 5h1v1h-1zM6 5h1v1h-1zM8 5h1v1h-1zM1 6h1v1h-1zM3 6h1v1h-1zM5 6h1v1h-1zM7 6h1v1h-1zM9 6h1v1h-1zM2 7h1v1h-1zM4 7h1v1h-1zM1 8h1v1h-1zM3 8h1v1h-1zM2 9h1v1h-1zM1 10h1v1h-1z"/><path fill="#ffffff" d="M2 4h1v1h-1zM1 5h1v1h-1zM3 5h1v1h-1zM5 5h1v1h-1zM7 5h1v1h-1zM9 5h1v1h-1zM2 6h1v1h-1zM4 6h1v1h-1zM6 6h1v1h-1zM8 6h1v1h-1zM1 7h1v1h-1zM3 7h1v1h-1zM2 8h1v1h-1zM1 9h1v1h-1z"/><path fill="#808000" d="M5 8h9v1h-9zM4 9h9v1h-9zM3 10h9v1h-9zM2 11h9v1h-9z"/></svg>
<svg class="a" style="left:58px;top:48px" width="14" height="14" viewBox="0 0 14 14" shape-rendering="crispEdges"><path fill="#000000" d="M0 0h14v1h-14zM0 1h1v1h-1zM2 1h1v1h-1zM11 1h1v1h-1zM13 1h1v1h-1zM0 2h1v1h-1zM2 2h1v1h-1zM11 2h3v1h-3zM0 3h1v1h-1zM2 3h1v1h-1zM11 3h1v1h-1zM13 3h1v1h-1zM0 4h1v1h-1zM2 4h1v1h-1zM11 4h1v1h-1zM13 4h1v1h-1zM0 5h1v1h-1zM2 5h1v1h-1zM11 5h1v1h-1zM13 5h1v1h-1zM0 6h1v1h-1zM2 6h10v1h-10zM13 6h1v1h-1zM0 7h1v1h-1zM13 7h1v1h-1zM0 8h1v1h-1zM13 8h1v1h-1zM0 9h1v1h-1zM3 9h8v1h-8zM13 9h1v1h-1zM0 10h1v1h-1zM3 10h5v1h-5zM10 10h1v1h-1zM13 10h1v1h-1zM0 11h1v1h-1zM3 11h5v1h-5zM10 11h1v1h-1zM13 11h1v1h-1zM0 12h1v1h-1zM3 12h5v1h-5zM10 12h1v1h-1zM13 12h1v1h-1zM1 13h13v1h-13z"/><path fill="#808000" d="M1 1h1v1h-1zM1 2h1v1h-1zM1 3h1v1h-1zM12 3h1v1h-1zM1 4h1v1h-1zM12 4h1v1h-1zM1 5h1v1h-1zM12 5h1v1h-1zM1 6h1v1h-1zM12 6h1v1h-1zM1 7h12v1h-12zM1 8h12v1h-12zM1 9h2v1h-2zM11 9h2v1h-2zM1 10h2v1h-2zM11 10h2v1h-2zM1 11h2v1h-2zM11 11h2v1h-2zM1 12h2v1h-2zM11 12h2v1h-2z"/><path fill="#c0c0c0" d="M3 1h8v1h-8zM3 2h8v1h-8zM3 3h8v1h-8zM3 4h8v1h-8zM3 5h8v1h-8zM8 10h2v1h-2zM8 11h2v1h-2zM8 12h2v1h-2z"/><path fill="#ffffff" d="M12 1h1v1h-1z"/></svg>
<svg class="a" style="left:80px;top:47px" width="16" height="16" viewBox="0 0 16 16" shape-rendering="crispEdges"><path fill="#c0c0c0" d="M7 0h6v1h-6z"/><path fill="#000000" d="M6 1h1v1h-1zM13 1h1v1h-1zM5 2h1v1h-1zM14 2h1v1h-1zM4 3h1v1h-1zM15 3h1v1h-1zM3 4h1v1h-1zM15 4h1v1h-1zM3 5h1v1h-1zM15 5h1v1h-1zM3 6h1v1h-1zM15 6h1v1h-1zM3 7h1v1h-1zM15 7h1v1h-1zM3 8h1v1h-1zM15 8h1v1h-1zM0 9h13v1h-13zM15 9h1v1h-1zM0 10h1v1h-1zM12 10h1v1h-1zM15 10h1v1h-1zM0 11h1v1h-1zM2 11h2v1h-2zM12 11h1v1h-1zM15 11h1v1h-1zM0 12h1v1h-1zM12 12h4v1h-4zM0 13h1v1h-1zM2 13h2v1h-2zM12 13h1v1h-1zM0 14h1v1h-1zM12 14h1v1h-1zM0 15h13v1h-13z"/><path fill="#ffffff" d="M7 1h6v1h-6zM6 2h8v1h-8zM5 3h10v1h-10zM4 4h11v1h-11zM4 5h8v1h-8zM14 5h1v1h-1zM4 6h8v1h-8zM14 6h1v1h-1zM4 7h2v1h-2zM12 7h3v1h-3zM4 8h11v1h-11zM13 9h2v1h-2zM1 10h11v1h-11zM13 10h2v1h-2zM1 11h1v1h-1zM4 11h1v1h-1zM11 11h1v1h-1zM13 11h2v1h-2zM1 12h11v1h-11zM1 13h1v1h-1zM4 13h1v1h-1zM11 13h1v1h-1zM1 14h11v1h-11z"/><path fill="#800000" d="M12 5h2v1h-2zM12 6h2v1h-2z"/><path fill="#000080" d="M6 7h6v1h-6z"/><path fill="#808080" d="M5 11h6v1h-6zM5 13h6v1h-6z"/></svg>
<svg class="a" style="left:109px;top:48px" width="16" height="13" viewBox="0 0 16 13" shape-rendering="crispEdges"><path fill="#000000" d="M4 0h10v1h-10zM4 1h1v1h-1zM12 1h1v1h-1zM3 2h1v1h-1zM5 2h5v1h-5zM12 2h1v1h-1zM14 2h1v1h-1zM3 3h1v1h-1zM11 3h1v1h-1zM13 3h1v1h-1zM15 3h1v1h-1zM2 4h1v1h-1zM4 4h5v1h-5zM11 4h2v1h-2zM14 4h2v1h-2zM2 5h1v1h-1zM10 5h2v1h-2zM13 5h1v1h-1zM15 5h1v1h-1zM1 6h10v1h-10zM12 6h1v1h-1zM14 6h2v1h-2zM0 7h1v1h-1zM11 7h1v1h-1zM13 7h1v1h-1zM15 7h1v1h-1zM0 8h13v1h-13zM14 8h2v1h-2zM0 9h1v1h-1zM12 9h2v1h-2zM15 9h1v1h-1zM0 10h13v1h-13zM14 10h1v1h-1zM1 11h1v1h-1zM12 11h2v1h-2zM1 12h12v1h-12z"/><path fill="#ffffff" d="M5 1h7v1h-7zM4 2h1v1h-1zM10 2h2v1h-2zM4 3h7v1h-7zM14 3h1v1h-1zM3 4h1v1h-1zM9 4h2v1h-2zM13 4h1v1h-1zM3 5h7v1h-7zM12 5h1v1h-1zM14 5h1v1h-1zM11 6h1v1h-1zM13 6h1v1h-1zM1 7h10v1h-10zM12 7h1v1h-1zM14 7h1v1h-1zM13 8h1v1h-1zM14 9h1v1h-1zM13 10h1v1h-1zM2 11h10v1h-10z"/><path fill="#c0c0c0" d="M1 9h6v1h-6zM10 9h2v1h-2z"/><path fill="#ffff00" d="M7 9h3v1h-3z"/></svg>
<svg class="a" style="left:132px;top:47px" width="16" height="15" viewBox="0 0 16 15" shape-rendering="crispEdges"><path fill="#000000" d="M0 0h8v1h-8zM0 1h1v1h-1zM7 1h2v1h-2zM0 2h1v1h-1zM7 2h1v1h-1zM9 2h1v1h-1zM0 3h1v1h-1zM7 3h4v1h-4zM0 4h1v1h-1zM10 4h1v1h-1zM0 5h1v1h-1zM7 5h5v1h-5zM0 6h1v1h-1zM6 6h1v1h-1zM12 6h1v1h-1zM0 7h1v1h-1zM5 7h1v1h-1zM13 7h1v1h-1zM0 8h1v1h-1zM5 8h1v1h-1zM13 8h1v1h-1zM0 9h1v1h-1zM5 9h1v1h-1zM13 9h1v1h-1zM0 10h1v1h-1zM6 10h1v1h-1zM12 10h1v1h-1zM0 11h1v1h-1zM7 11h6v1h-6zM0 12h1v1h-1zM10 12h1v1h-1zM12 12h2v1h-2zM0 13h1v1h-1zM10 13h1v1h-1zM13 13h2v1h-2zM0 14h11v1h-11zM14 14h2v1h-2z"/><path fill="#ffffff" d="M1 1h6v1h-6zM1 2h6v1h-6zM8 2h1v1h-1zM1 3h6v1h-6zM1 4h9v1h-9zM1 5h6v1h-6zM1 6h5v1h-5zM9 6h1v1h-1zM1 7h4v1h-4zM8 7h1v1h-1zM11 7h1v1h-1zM1 8h4v1h-4zM7 8h1v1h-1zM1 9h4v1h-4zM1 10h5v1h-5zM1 11h6v1h-6zM1 12h9v1h-9zM1 13h9v1h-9z"/><path fill="#808080" d="M7 6h1v1h-1zM11 6h1v1h-1zM6 7h1v1h-1zM12 7h1v1h-1zM6 8h1v1h-1zM12 8h1v1h-1zM6 9h1v1h-1zM12 9h1v1h-1zM7 10h1v1h-1zM11 10h1v1h-1z"/><path fill="#00ffff" d="M8 6h1v1h-1zM7 7h1v1h-1zM11 8h1v1h-1zM11 9h1v1h-1zM9 10h2v1h-2z"/><path fill="#c0c0c0" d="M10 6h1v1h-1zM9 7h2v1h-2zM8 8h3v1h-3zM7 9h4v1h-4zM8 10h1v1h-1z"/></svg>
<svg class="a" style="left:156px;top:48px" width="15" height="14" viewBox="0 0 15 14" shape-rendering="crispEdges"><path fill="#000000" d="M1 0h1v1h-1zM4 0h2v1h-2zM9 0h2v1h-2zM0 1h1v1h-1zM2 1h1v1h-1zM4 1h1v1h-1zM6 1h1v1h-1zM8 1h1v1h-1zM0 2h3v1h-3zM4 2h2v1h-2zM8 2h1v1h-1zM0 3h1v1h-1zM2 3h1v1h-1zM4 3h1v1h-1zM6 3h1v1h-1zM8 3h1v1h-1zM0 4h1v1h-1zM2 4h1v1h-1zM4 4h2v1h-2zM9 4h2v1h-2z"/><path fill="#000080" d="M13 2h1v1h-1zM12 3h1v1h-1zM11 4h1v1h-1zM9 5h2v1h-2zM8 6h2v1h-2zM7 7h2v1h-2zM1 8h2v1h-2zM6 8h2v1h-2zM0 9h4v1h-4zM5 9h2v1h-2zM1 10h5v1h-5zM2 11h4v1h-4zM3 12h2v1h-2zM4 13h1v1h-1z"/></svg>
<svg class="a" style="left:188px;top:49px" width="10" height="13" viewBox="0 0 10 13" shape-rendering="crispEdges"><path fill="#ffffff" d="M2 0h1v1h-1zM7 0h1v1h-1zM2 1h1v1h-1zM7 1h1v1h-1zM2 2h2v1h-2zM6 2h2v1h-2zM3 3h1v1h-1zM6 3h1v1h-1zM3 4h4v1h-4zM4 5h2v1h-2zM4 6h2v1h-2zM3 7h4v1h-4zM1 8h3v1h-3zM6 8h3v1h-3zM0 9h1v1h-1zM3 9h1v1h-1zM6 9h1v1h-1zM9 9h1v1h-1zM0 10h1v1h-1zM3 10h1v1h-1zM6 10h1v1h-1zM9 10h1v1h-1zM0 11h1v1h-1zM3 11h1v1h-1zM6 11h1v1h-1zM9 11h1v1h-1zM1 12h2v1h-2zM7 12h2v1h-2z"/></svg><svg class="a" style="left:187px;top:48px" width="10" height="13" viewBox="0 0 10 13" shape-rendering="crispEdges"><path fill="#808080" d="M2 0h1v1h-1zM7 0h1v1h-1zM2 1h1v1h-1zM7 1h1v1h-1zM2 2h2v1h-2zM6 2h2v1h-2zM3 3h1v1h-1zM6 3h1v1h-1zM3 4h4v1h-4zM4 5h2v1h-2zM4 6h2v1h-2zM3 7h4v1h-4zM1 8h3v1h-3zM6 8h3v1h-3zM0 9h1v1h-1zM3 9h1v1h-1zM6 9h1v1h-1zM9 9h1v1h-1zM0 10h1v1h-1zM3 10h1v1h-1zM6 10h1v1h-1zM9 10h1v1h-1zM0 11h1v1h-1zM3 11h1v1h-1zM6 11h1v1h-1zM9 11h1v1h-1zM1 12h2v1h-2zM7 12h2v1h-2z"/></svg>
<svg class="a" style="left:208px;top:49px" width="15" height="14" viewBox="0 0 15 14" shape-rendering="crispEdges"><path fill="#ffffff" d="M0 0h5v1h-5zM0 1h1v1h-1zM4 1h2v1h-2zM0 2h1v1h-1zM2 2h1v1h-1zM4 2h1v1h-1zM6 2h1v1h-1zM0 3h1v1h-1zM4 3h7v1h-7zM0 4h1v1h-1zM2 4h3v1h-3zM6 4h1v1h-1zM10 4h2v1h-2zM0 5h1v1h-1zM5 5h1v1h-1zM7 5h1v1h-1zM10 5h1v1h-1zM12 5h1v1h-1zM0 6h1v1h-1zM2 6h3v1h-3zM6 6h1v1h-1zM10 6h4v1h-4zM0 7h1v1h-1zM5 7h1v1h-1zM7 7h3v1h-3zM13 7h1v1h-1zM0 8h1v1h-1zM5 8h1v1h-1zM13 8h1v1h-1zM0 9h6v1h-6zM7 9h4v1h-4zM13 9h1v1h-1zM5 10h1v1h-1zM13 10h1v1h-1zM5 11h1v1h-1zM7 11h4v1h-4zM13 11h1v1h-1zM5 12h1v1h-1zM13 12h1v1h-1zM5 13h9v1h-9z"/></svg><svg class="a" style="left:207px;top:48px" width="15" height="14" viewBox="0 0 15 14" shape-rendering="crispEdges"><path fill="#808080" d="M0 0h5v1h-5zM0 1h1v1h-1zM4 1h2v1h-2zM0 2h1v1h-1zM2 2h1v1h-1zM4 2h1v1h-1zM6 2h1v1h-1zM0 3h1v1h-1zM4 3h7v1h-7zM0 4h1v1h-1zM2 4h3v1h-3zM6 4h1v1h-1zM10 4h2v1h-2zM0 5h1v1h-1zM5 5h1v1h-1zM7 5h1v1h-1zM10 5h1v1h-1zM12 5h1v1h-1zM0 6h1v1h-1zM2 6h3v1h-3zM6 6h1v1h-1zM10 6h4v1h-4zM0 7h1v1h-1zM5 7h1v1h-1zM7 7h3v1h-3zM13 7h1v1h-1zM0 8h1v1h-1zM5 8h1v1h-1zM13 8h1v1h-1zM0 9h6v1h-6zM7 9h4v1h-4zM13 9h1v1h-1zM5 10h1v1h-1zM13 10h1v1h-1zM5 11h1v1h-1zM7 11h4v1h-4zM13 11h1v1h-1zM5 12h1v1h-1zM13 12h1v1h-1zM5 13h9v1h-9z"/></svg>
<svg class="a" style="left:230px;top:48px" width="16" height="14" viewBox="0 0 16 14" shape-rendering="crispEdges"><path fill="#ffff00" d="M6 0h4v1h-4zM5 1h2v1h-2zM9 1h2v1h-2z"/><path fill="#000000" d="M1 1h4v1h-4zM7 1h2v1h-2zM11 1h3v1h-3zM0 2h1v1h-1zM4 2h2v1h-2zM10 2h2v1h-2zM14 2h1v1h-1zM0 3h1v1h-1zM4 3h8v1h-8zM14 3h1v1h-1zM0 4h1v1h-1zM14 4h1v1h-1zM0 5h1v1h-1zM14 5h1v1h-1zM0 6h1v1h-1zM0 7h1v1h-1zM0 8h1v1h-1zM0 9h1v1h-1zM0 10h1v1h-1zM0 11h1v1h-1zM0 12h6v1h-6z"/><path fill="#808000" d="M1 2h3v1h-3zM12 2h2v1h-2zM1 3h1v1h-1zM3 3h1v1h-1zM12 3h1v1h-1zM2 4h1v1h-1zM4 4h1v1h-1zM6 4h1v1h-1zM8 4h1v1h-1zM10 4h1v1h-1zM12 4h1v1h-1zM1 5h1v1h-1zM3 5h1v1h-1zM5 5h1v1h-1zM7 5h1v1h-1zM9 5h1v1h-1zM11 5h1v1h-1zM13 5h1v1h-1zM2 6h1v1h-1zM4 6h1v1h-1zM1 7h1v1h-1zM3 7h1v1h-1zM5 7h1v1h-1zM2 8h1v1h-1zM4 8h1v1h-1zM1 9h1v1h-1zM3 9h1v1h-1zM5 9h1v1h-1zM2 10h1v1h-1zM4 10h1v1h-1zM1 11h1v1h-1zM3 11h1v1h-1zM5 11h1v1h-1z"/><path fill="#ffffff" d="M6 2h4v1h-4zM7 7h5v1h-5zM7 8h5v1h-5zM13 8h1v1h-1zM7 9h1v1h-1zM11 9h1v1h-1zM7 10h8v1h-8zM7 11h1v1h-1zM14 11h1v1h-1zM7 12h8v1h-8z"/><path fill="#808080" d="M2 3h1v1h-1zM13 3h1v1h-1zM1 4h1v1h-1zM3 4h1v1h-1zM5 4h1v1h-1zM7 4h1v1h-1zM9 4h1v1h-1zM11 4h1v1h-1zM13 4h1v1h-1zM2 5h1v1h-1zM4 5h1v1h-1zM6 5h1v1h-1zM8 5h1v1h-1zM10 5h1v1h-1zM12 5h1v1h-1zM1 6h1v1h-1zM3 6h1v1h-1zM5 6h1v1h-1zM2 7h1v1h-1zM4 7h1v1h-1zM1 8h1v1h-1zM3 8h1v1h-1zM5 8h1v1h-1zM2 9h1v1h-1zM4 9h1v1h-1zM1 10h1v1h-1zM3 10h1v1h-1zM5 10h1v1h-1zM2 11h1v1h-1zM4 11h1v1h-1z"/><path fill="#000080" d="M6 6h7v1h-7zM6 7h1v1h-1zM12 7h2v1h-2zM6 8h1v1h-1zM12 8h1v1h-1zM14 8h1v1h-1zM6 9h1v1h-1zM8 9h3v1h-3zM12 9h4v1h-4zM6 10h1v1h-1zM15 10h1v1h-1zM6 11h1v1h-1zM8 11h6v1h-6zM15 11h1v1h-1zM6 12h1v1h-1zM15 12h1v1h-1zM6 13h10v1h-10z"/></svg>
<svg class="a" style="left:253px;top:47px" width="16" height="15" viewBox="0 0 16 15" shape-rendering="crispEdges"><path fill="#000000" d="M13 0h2v1h-2zM12 1h1v1h-1zM15 1h1v1h-1zM9 2h3v1h-3zM14 2h1v1h-1zM7 3h2v1h-2zM11 3h1v1h-1zM13 3h1v1h-1zM5 4h2v1h-2zM12 4h1v1h-1zM1 5h4v1h-4zM12 5h1v1h-1zM0 6h1v1h-1zM12 6h1v1h-1zM1 7h1v1h-1zM11 7h1v1h-1zM2 8h1v1h-1zM11 8h1v1h-1zM3 9h1v1h-1zM11 9h1v1h-1zM4 10h1v1h-1zM11 10h1v1h-1zM5 11h1v1h-1zM10 11h1v1h-1zM6 12h4v1h-4z"/><path fill="#000080" d="M13 1h2v1h-2zM12 2h2v1h-2zM12 3h1v1h-1z"/><path fill="#c0c0c0" d="M9 3h2v1h-2zM9 4h3v1h-3zM10 5h2v1h-2zM11 6h1v1h-1z"/><path fill="#ffff00" d="M7 4h2v1h-2zM7 5h3v1h-3zM8 6h3v1h-3zM9 7h2v1h-2zM9 8h2v1h-2zM10 9h1v1h-1zM10 10h1v1h-1zM5 13h1v1h-1zM0 14h1v1h-1zM2 14h1v1h-1zM4 14h1v1h-1z"/><path fill="#ffffff" d="M5 5h2v1h-2zM1 6h3v1h-3zM5 6h2v1h-2zM2 7h1v1h-1zM4 7h2v1h-2zM7 7h2v1h-2zM3 8h2v1h-2zM6 8h2v1h-2zM5 9h2v1h-2zM8 9h2v1h-2zM5 10h1v1h-1zM7 10h2v1h-2zM6 11h2v1h-2zM9 11h1v1h-1z"/><path fill="#808080" d="M4 6h1v1h-1zM7 6h1v1h-1zM3 7h1v1h-1zM6 7h1v1h-1zM5 8h1v1h-1zM8 8h1v1h-1zM4 9h1v1h-1zM7 9h1v1h-1zM6 10h1v1h-1zM9 10h1v1h-1zM8 11h1v1h-1z"/></svg>
<svg class="a" style="left:284px;top:51px" width="12" height="7" viewBox="0 0 12 7" shape-rendering="crispEdges"><path fill="#000080" d="M6 0h4v1h-4zM0 1h1v1h-1zM4 1h2v1h-2zM10 1h1v1h-1zM0 2h2v1h-2zM3 2h1v1h-1zM11 2h1v1h-1zM0 3h3v1h-3zM11 3h1v1h-1zM0 4h4v1h-4zM11 4h1v1h-1zM0 5h5v1h-5zM10 5h1v1h-1zM9 6h2v1h-2z"/></svg>
<svg class="a" style="left:319px;top:52px" width="12" height="7" viewBox="0 0 12 7" shape-rendering="crispEdges"><path fill="#ffffff" d="M2 0h4v1h-4zM1 1h1v1h-1zM6 1h2v1h-2zM11 1h1v1h-1zM0 2h1v1h-1zM8 2h1v1h-1zM10 2h2v1h-2zM0 3h1v1h-1zM9 3h3v1h-3zM0 4h1v1h-1zM8 4h4v1h-4zM1 5h1v1h-1zM7 5h5v1h-5zM1 6h2v1h-2z"/></svg><svg class="a" style="left:318px;top:51px" width="12" height="7" viewBox="0 0 12 7" shape-rendering="crispEdges"><path fill="#808080" d="M2 0h4v1h-4zM1 1h1v1h-1zM6 1h2v1h-2zM11 1h1v1h-1zM0 2h1v1h-1zM8 2h1v1h-1zM10 2h2v1h-2zM0 3h1v1h-1zM9 3h3v1h-3zM0 4h1v1h-1zM8 4h4v1h-4zM1 5h1v1h-1zM7 5h5v1h-5zM1 6h2v1h-2z"/></svg>
<svg class="a" style="left:356px;top:47px" width="16" height="16" viewBox="0 0 16 16" shape-rendering="crispEdges"><path fill="#000000" d="M3 0h5v1h-5zM2 1h1v1h-1zM8 1h2v1h-2zM1 2h1v1h-1zM10 2h1v1h-1zM0 3h1v1h-1zM11 3h1v1h-1zM0 4h1v1h-1zM11 4h1v1h-1zM0 5h1v1h-1zM11 5h1v1h-1zM0 6h1v1h-1zM11 6h1v1h-1zM0 7h1v1h-1zM10 7h1v1h-1zM1 8h1v1h-1zM10 8h1v1h-1zM2 9h1v1h-1zM5 9h9v1h-9zM3 10h2v1h-2zM9 10h1v1h-1zM14 10h1v1h-1zM3 11h1v1h-1zM5 11h8v1h-8zM14 11h1v1h-1zM3 12h1v1h-1zM5 12h1v1h-1zM11 12h1v1h-1zM14 12h1v1h-1zM3 13h1v1h-1zM5 13h8v1h-8zM14 13h1v1h-1zM3 14h2v1h-2zM9 14h1v1h-1zM14 14h1v1h-1zM4 15h5v1h-5zM10 15h4v1h-4z"/><path fill="#ffffff" d="M3 1h1v1h-1zM2 2h2v1h-2zM2 3h1v1h-1zM5 10h4v1h-4zM10 10h4v1h-4zM4 11h1v1h-1zM13 11h1v1h-1zM4 12h1v1h-1zM6 12h5v1h-5zM12 12h2v1h-2zM4 13h1v1h-1zM13 13h1v1h-1zM5 14h4v1h-4zM10 14h4v1h-4z"/><path fill="#00ffff" d="M4 1h1v1h-1z"/><path fill="#0000ff" d="M5 1h1v1h-1zM4 2h1v1h-1zM9 2h1v1h-1zM1 3h1v1h-1zM3 3h1v1h-1zM9 3h2v1h-2zM1 4h2v1h-2zM7 4h1v1h-1zM10 4h1v1h-1zM1 5h3v1h-3zM9 5h2v1h-2zM1 6h4v1h-4zM8 6h3v1h-3zM1 7h5v1h-5zM8 7h2v1h-2zM2 8h4v1h-4zM7 8h3v1h-3zM3 9h2v1h-2z"/><path fill="#008000" d="M6 1h2v1h-2zM5 2h4v1h-4zM4 3h5v1h-5zM3 4h4v1h-4zM8 4h2v1h-2zM4 5h5v1h-5zM5 6h3v1h-3zM6 7h2v1h-2zM6 8h1v1h-1z"/></svg>
<svg class="a" style="left:380px;top:47px" width="15" height="15" viewBox="0 0 15 15" shape-rendering="crispEdges"><path fill="#000000" d="M0 0h15v1h-15zM0 1h1v1h-1zM7 1h1v1h-1zM14 1h1v1h-1zM0 2h1v1h-1zM7 2h1v1h-1zM14 2h1v1h-1zM0 3h1v1h-1zM7 3h1v1h-1zM10 3h2v1h-2zM14 3h1v1h-1zM0 4h1v1h-1zM7 4h1v1h-1zM10 4h1v1h-1zM14 4h1v1h-1zM0 5h1v1h-1zM7 5h1v1h-1zM9 5h1v1h-1zM11 5h1v1h-1zM14 5h1v1h-1zM0 6h1v1h-1zM7 6h1v1h-1zM9 6h1v1h-1zM11 6h1v1h-1zM14 6h1v1h-1zM0 7h9v1h-9zM11 7h4v1h-4zM0 8h1v1h-1zM7 8h2v1h-2zM10 8h1v1h-1zM14 8h1v1h-1zM0 9h1v1h-1zM7 9h1v1h-1zM10 9h1v1h-1zM14 9h1v1h-1zM0 10h1v1h-1zM7 10h1v1h-1zM9 10h1v1h-1zM14 10h1v1h-1zM0 11h1v1h-1zM7 11h3v1h-3zM14 11h1v1h-1zM0 12h1v1h-1zM7 12h2v1h-2zM14 12h1v1h-1zM0 13h1v1h-1zM7 13h1v1h-1zM14 13h1v1h-1zM0 14h15v1h-15z"/><path fill="#800000" d="M11 4h2v1h-2z"/><path fill="#ffff00" d="M10 5h1v1h-1zM10 6h1v1h-1zM9 7h2v1h-2zM9 8h1v1h-1zM8 9h2v1h-2zM8 10h1v1h-1z"/></svg>
<svg class="a" style="left:402px;top:48px" width="16" height="13" viewBox="0 0 16 13" shape-rendering="crispEdges"><path fill="#000000" d="M0 0h16v1h-16zM0 1h1v1h-1zM15 1h1v1h-1zM0 2h1v1h-1zM15 2h1v1h-1zM0 3h1v1h-1zM15 3h1v1h-1zM0 4h1v1h-1zM15 4h1v1h-1zM0 5h1v1h-1zM15 5h1v1h-1zM0 6h1v1h-1zM15 6h1v1h-1zM0 7h1v1h-1zM15 7h1v1h-1zM0 8h1v1h-1zM15 8h1v1h-1zM0 9h1v1h-1zM15 9h1v1h-1zM0 10h1v1h-1zM15 10h1v1h-1zM0 11h1v1h-1zM15 11h1v1h-1zM0 12h16v1h-16z"/><path fill="#000080" d="M1 1h14v1h-14zM1 2h14v1h-14z"/><path fill="#ffffff" d="M1 3h2v1h-2zM4 3h3v1h-3zM8 3h3v1h-3zM12 3h3v1h-3zM1 4h2v1h-2zM4 4h3v1h-3zM8 4h3v1h-3zM12 4h3v1h-3zM1 6h2v1h-2zM4 6h3v1h-3zM8 6h3v1h-3zM12 6h3v1h-3zM1 7h2v1h-2zM4 7h3v1h-3zM8 7h3v1h-3zM12 7h3v1h-3zM1 9h2v1h-2zM4 9h3v1h-3zM8 9h3v1h-3zM12 9h3v1h-3zM1 10h2v1h-2zM4 10h3v1h-3zM8 10h3v1h-3zM12 10h3v1h-3zM1 11h2v1h-2zM4 11h3v1h-3zM8 11h3v1h-3zM12 11h3v1h-3z"/><path fill="#c0c0c0" d="M3 3h1v1h-1zM7 3h1v1h-1zM11 3h1v1h-1zM3 4h1v1h-1zM7 4h1v1h-1zM11 4h1v1h-1zM1 5h14v1h-14zM3 6h1v1h-1zM7 6h1v1h-1zM11 6h1v1h-1zM3 7h1v1h-1zM7 7h1v1h-1zM11 7h1v1h-1zM1 8h14v1h-14zM3 9h1v1h-1zM7 9h1v1h-1zM11 9h1v1h-1zM3 10h1v1h-1zM7 10h1v1h-1zM11 10h1v1h-1zM3 11h1v1h-1zM7 11h1v1h-1zM11 11h1v1h-1z"/></svg>
<svg class="a" style="left:425px;top:48px" width="16" height="13" viewBox="0 0 16 13" shape-rendering="crispEdges"><path fill="#000000" d="M0 0h16v1h-16zM0 1h1v1h-1zM15 1h1v1h-1zM0 2h1v1h-1zM15 2h1v1h-1zM0 3h1v1h-1zM15 3h1v1h-1zM0 4h1v1h-1zM15 4h1v1h-1zM0 5h1v1h-1zM15 5h1v1h-1zM0 6h1v1h-1zM15 6h1v1h-1zM0 7h1v1h-1zM15 7h1v1h-1zM0 8h1v1h-1zM15 8h1v1h-1zM0 9h1v1h-1zM15 9h1v1h-1zM0 10h1v1h-1zM15 10h1v1h-1zM0 11h1v1h-1zM15 11h1v1h-1zM0 12h16v1h-16z"/><path fill="#000080" d="M1 1h14v1h-14zM1 2h14v1h-14z"/><path fill="#ffffff" d="M1 3h2v1h-2zM4 3h3v1h-3zM8 3h3v1h-3zM12 3h3v1h-3zM1 4h2v1h-2zM4 4h3v1h-3zM8 4h3v1h-3zM12 4h3v1h-3zM1 6h2v1h-2zM4 6h3v1h-3zM8 6h3v1h-3zM12 6h3v1h-3zM1 7h2v1h-2zM4 7h3v1h-3zM8 7h3v1h-3zM12 7h3v1h-3zM1 9h2v1h-2zM4 9h3v1h-3zM8 9h3v1h-3zM12 9h3v1h-3zM1 10h2v1h-2zM4 10h3v1h-3zM8 10h3v1h-3zM12 10h3v1h-3zM1 11h2v1h-2zM4 11h3v1h-3zM8 11h3v1h-3zM12 11h3v1h-3z"/><path fill="#c0c0c0" d="M3 3h1v1h-1zM7 3h1v1h-1zM11 3h1v1h-1zM3 4h1v1h-1zM7 4h1v1h-1zM11 4h1v1h-1zM1 5h14v1h-14zM3 6h1v1h-1zM7 6h1v1h-1zM11 6h1v1h-1zM3 7h1v1h-1zM7 7h1v1h-1zM11 7h1v1h-1zM1 8h14v1h-14zM3 9h1v1h-1zM7 9h1v1h-1zM11 9h1v1h-1zM3 10h1v1h-1zM7 10h1v1h-1zM11 10h1v1h-1zM3 11h1v1h-1zM7 11h1v1h-1zM11 11h1v1h-1z"/></svg>
<svg class="a" style="left:429px;top:52px" width="12" height="11" viewBox="0 0 12 11" shape-rendering="crispEdges"><path fill="#008000" d="M0 0h1v1h-1zM2 0h1v1h-1zM10 0h1v1h-1zM1 1h1v1h-1zM3 1h1v1h-1zM9 1h1v1h-1zM11 1h1v1h-1zM0 2h1v1h-1zM2 2h1v1h-1zM4 2h1v1h-1zM8 2h1v1h-1zM10 2h1v1h-1zM1 3h1v1h-1zM3 3h1v1h-1zM5 3h1v1h-1zM7 3h1v1h-1zM9 3h1v1h-1zM2 4h1v1h-1zM4 4h1v1h-1zM6 4h1v1h-1zM8 4h1v1h-1zM3 5h1v1h-1zM5 5h1v1h-1zM7 5h1v1h-1zM2 6h1v1h-1zM4 6h1v1h-1zM6 6h1v1h-1zM8 6h1v1h-1zM1 7h1v1h-1zM3 7h1v1h-1zM5 7h1v1h-1zM7 7h1v1h-1zM9 7h1v1h-1zM0 8h1v1h-1zM2 8h1v1h-1zM4 8h1v1h-1zM8 8h1v1h-1zM10 8h1v1h-1zM1 9h1v1h-1zM3 9h1v1h-1zM9 9h1v1h-1zM11 9h1v1h-1zM0 10h1v1h-1zM2 10h1v1h-1zM10 10h1v1h-1z"/></svg>
<div class="a" style="left:449px;top:49px;width:6px;height:1px;background:#000;"></div>
<div class="a" style="left:456px;top:49px;width:6px;height:1px;background:#000;"></div>
<div class="a" style="left:449px;top:51px;width:6px;height:1px;background:#000;"></div>
<div class="a" style="left:456px;top:51px;width:6px;height:1px;background:#000;"></div>
<div class="a" style="left:449px;top:53px;width:6px;height:1px;background:#000;"></div>
<div class="a" style="left:456px;top:53px;width:6px;height:1px;background:#000;"></div>
<div class="a" style="left:449px;top:55px;width:6px;height:1px;background:#000;"></div>
<div class="a" style="left:456px;top:55px;width:6px;height:1px;background:#000;"></div>
<div class="a" style="left:449px;top:57px;width:6px;height:1px;background:#000;"></div>
<div class="a" style="left:456px;top:57px;width:6px;height:1px;background:#000;"></div>
<div class="a" style="left:449px;top:59px;width:6px;height:1px;background:#000;"></div>
<div class="a" style="left:456px;top:59px;width:6px;height:1px;background:#000;"></div>
<svg class="a" style="left:471px;top:47px" width="16" height="16" viewBox="0 0 16 16" shape-rendering="crispEdges"><path fill="#000000" d="M6 0h9v1h-9zM5 1h1v1h-1zM11 1h1v1h-1zM14 1h1v1h-1zM4 2h8v1h-8zM14 2h1v1h-1zM4 3h1v1h-1zM11 3h1v1h-1zM14 3h1v1h-1zM4 4h1v1h-1zM11 4h1v1h-1zM14 4h1v1h-1zM4 5h1v1h-1zM6 5h1v1h-1zM11 5h1v1h-1zM14 5h1v1h-1zM6 6h1v1h-1zM11 6h1v1h-1zM14 6h1v1h-1zM6 7h1v1h-1zM11 7h4v1h-4zM6 8h1v1h-1zM9 8h2v1h-2zM14 8h2v1h-2zM6 9h3v1h-3zM14 9h2v1h-2zM6 10h2v1h-2zM14 10h1v1h-1zM6 11h1v1h-1zM13 11h1v1h-1zM6 12h1v1h-1zM11 12h2v1h-2zM6 13h1v1h-1zM11 13h1v1h-1zM6 14h2v1h-2zM10 14h1v1h-1zM7 15h3v1h-3z"/><path fill="#c0c0c0" d="M6 1h5v1h-5zM13 8h1v1h-1zM12 9h1v1h-1zM12 10h1v1h-1zM11 11h1v1h-1z"/><path fill="#808000" d="M12 1h2v1h-2zM12 2h2v1h-2zM12 3h2v1h-2zM12 4h2v1h-2zM12 5h2v1h-2zM12 6h2v1h-2z"/><path fill="#ffff00" d="M5 3h6v1h-6zM5 4h6v1h-6zM7 5h4v1h-4zM7 6h4v1h-4zM7 7h4v1h-4zM7 8h2v1h-2z"/><path fill="#000080" d="M5 5h1v1h-1zM4 6h2v1h-2zM3 7h1v1h-1zM5 7h1v1h-1zM3 8h1v1h-1zM5 8h1v1h-1zM2 9h1v1h-1zM5 9h1v1h-1zM2 10h4v1h-4zM1 11h1v1h-1zM5 11h1v1h-1zM1 12h2v1h-2zM5 12h1v1h-1zM0 13h3v1h-3zM4 13h2v1h-2z"/><path fill="#0000ff" d="M4 7h1v1h-1zM4 8h1v1h-1zM3 9h1v1h-1zM2 11h1v1h-1z"/><path fill="#ffffff" d="M11 8h2v1h-2zM10 9h2v1h-2zM10 10h2v1h-2zM10 11h1v1h-1z"/><path fill="#00ffff" d="M9 9h1v1h-1zM8 10h2v1h-2zM7 11h3v1h-3zM7 12h4v1h-4zM7 13h4v1h-4zM8 14h2v1h-2z"/><path fill="#808080" d="M13 9h1v1h-1zM13 10h1v1h-1zM12 11h1v1h-1z"/></svg>
<svg class="a" style="left:500px;top:47px" width="15" height="15" viewBox="0 0 15 15" shape-rendering="crispEdges"><path fill="#000080" d="M0 0h15v1h-15zM0 1h15v1h-15zM0 2h15v1h-15z"/><path fill="#000000" d="M0 3h1v1h-1zM14 3h1v1h-1zM0 4h1v1h-1zM3 4h4v1h-4zM14 4h1v1h-1zM0 5h1v1h-1zM2 5h1v1h-1zM7 5h1v1h-1zM14 5h1v1h-1zM0 6h2v1h-2zM8 6h1v1h-1zM14 6h1v1h-1zM0 7h2v1h-2zM8 7h1v1h-1zM14 7h1v1h-1zM0 8h2v1h-2zM8 8h1v1h-1zM14 8h1v1h-1zM0 9h1v1h-1zM2 9h1v1h-1zM7 9h1v1h-1zM14 9h1v1h-1zM0 10h1v1h-1zM3 10h5v1h-5zM14 10h1v1h-1zM0 11h1v1h-1zM8 11h1v1h-1zM14 11h1v1h-1zM0 12h1v1h-1zM10 12h1v1h-1zM14 12h1v1h-1zM0 13h9v1h-9zM11 13h4v1h-4zM10 14h2v1h-2z"/><path fill="#ffffff" d="M1 3h13v1h-13zM1 4h2v1h-2zM7 4h2v1h-2zM12 4h2v1h-2zM1 5h1v1h-1zM5 5h1v1h-1zM8 5h6v1h-6zM4 6h1v1h-1zM9 6h1v1h-1zM13 6h1v1h-1zM3 7h1v1h-1zM9 7h5v1h-5zM4 8h1v1h-1zM9 8h1v1h-1zM13 8h1v1h-1zM1 9h1v1h-1zM8 9h6v1h-6zM1 10h2v1h-2zM8 10h2v1h-2zM13 10h1v1h-1zM1 11h6v1h-6zM9 11h5v1h-5zM1 12h7v1h-7zM9 12h1v1h-1zM11 12h3v1h-3zM10 13h1v1h-1z"/><path fill="#c0c0c0" d="M9 4h3v1h-3zM6 6h1v1h-1zM10 6h3v1h-3zM6 7h1v1h-1zM6 8h1v1h-1zM10 8h3v1h-3zM4 9h1v1h-1zM10 10h3v1h-3z"/><path fill="#808080" d="M3 5h1v1h-1zM6 5h1v1h-1zM2 6h1v1h-1zM7 6h1v1h-1zM2 7h1v1h-1zM7 7h1v1h-1zM2 8h1v1h-1zM7 8h1v1h-1zM3 9h1v1h-1zM6 9h1v1h-1z"/><path fill="#00ffff" d="M4 5h1v1h-1zM3 6h1v1h-1zM5 6h1v1h-1zM4 7h2v1h-2zM3 8h1v1h-1zM5 8h1v1h-1zM5 9h1v1h-1z"/><path fill="#ff0000" d="M7 11h1v1h-1zM8 12h1v1h-1zM9 13h1v1h-1z"/></svg>
<svg class="a" style="left:525px;top:49px" width="10" height="12" viewBox="0 0 10 12" shape-rendering="crispEdges"><path fill="#000000" d="M2 0h8v1h-8zM1 1h5v1h-5zM8 1h1v1h-1zM0 2h6v1h-6zM8 2h1v1h-1zM0 3h6v1h-6zM8 3h1v1h-1zM0 4h6v1h-6zM8 4h1v1h-1zM1 5h5v1h-5zM8 5h1v1h-1zM2 6h4v1h-4zM8 6h1v1h-1zM5 7h1v1h-1zM8 7h1v1h-1zM5 8h1v1h-1zM8 8h1v1h-1zM5 9h1v1h-1zM8 9h1v1h-1zM5 10h1v1h-1zM8 10h1v1h-1zM5 11h1v1h-1zM8 11h1v1h-1z"/></svg>
<svg class="a" style="left:611px;top:47px" width="14" height="16" viewBox="0 0 14 16" shape-rendering="crispEdges"><path fill="#000000" d="M1 0h11v1h-11zM0 1h1v1h-1zM12 1h1v1h-1zM0 2h1v1h-1zM12 2h2v1h-2zM0 3h1v1h-1zM12 3h2v1h-2zM0 4h1v1h-1zM12 4h2v1h-2zM0 5h1v1h-1zM12 5h2v1h-2zM0 6h1v1h-1zM12 6h2v1h-2zM0 7h1v1h-1zM12 7h2v1h-2zM0 8h1v1h-1zM12 8h2v1h-2zM0 9h1v1h-1zM12 9h2v1h-2zM0 10h1v1h-1zM12 10h2v1h-2zM0 11h1v1h-1zM12 11h2v1h-2zM1 12h7v1h-7zM10 12h3v1h-3zM8 13h1v1h-1zM10 13h1v1h-1zM9 14h2v1h-2zM10 15h1v1h-1z"/><path fill="#ffffff" d="M1 1h1v1h-1zM3 1h1v1h-1zM5 1h1v1h-1zM7 1h1v1h-1zM9 1h1v1h-1zM11 1h1v1h-1zM1 2h11v1h-11zM2 3h2v1h-2zM8 3h2v1h-2zM11 3h1v1h-1zM1 4h2v1h-2zM5 4h2v1h-2zM9 4h3v1h-3zM2 5h5v1h-5zM9 5h1v1h-1zM11 5h1v1h-1zM1 6h5v1h-5zM8 6h4v1h-4zM2 7h3v1h-3zM7 7h3v1h-3zM11 7h1v1h-1zM1 8h11v1h-11zM2 9h3v1h-3zM7 9h3v1h-3zM11 9h1v1h-1zM1 10h11v1h-11zM1 11h1v1h-1zM3 11h1v1h-1zM5 11h1v1h-1zM7 11h1v1h-1zM9 11h1v1h-1zM11 11h1v1h-1zM9 12h1v1h-1zM9 13h1v1h-1z"/><path fill="#ffff00" d="M2 1h1v1h-1zM4 1h1v1h-1zM6 1h1v1h-1zM8 1h1v1h-1zM10 1h1v1h-1zM1 3h1v1h-1zM10 3h1v1h-1zM1 5h1v1h-1zM10 5h1v1h-1zM1 7h1v1h-1zM10 7h1v1h-1zM1 9h1v1h-1zM10 9h1v1h-1zM2 11h1v1h-1zM4 11h1v1h-1zM6 11h1v1h-1zM8 11h1v1h-1zM10 11h1v1h-1zM8 12h1v1h-1z"/><path fill="#000080" d="M4 3h4v1h-4zM3 4h2v1h-2zM7 4h2v1h-2zM7 5h2v1h-2zM6 6h2v1h-2zM5 7h2v1h-2zM5 9h2v1h-2z"/></svg>
<svg class="a" style="left:334px;top:77px" width="8" height="9" viewBox="0 0 8 9" shape-rendering="crispEdges"><path fill="#000000" d="M0 0h7v1h-7zM1 1h3v1h-3zM5 1h3v1h-3zM1 2h3v1h-3zM5 2h3v1h-3zM1 3h3v1h-3zM5 3h2v1h-2zM1 4h5v1h-5zM1 5h3v1h-3zM5 5h3v1h-3zM1 6h3v1h-3zM5 6h3v1h-3zM1 7h3v1h-3zM5 7h3v1h-3zM0 8h7v1h-7z"/></svg>
<svg class="a" style="left:355px;top:77px" width="9" height="9" viewBox="0 0 9 9" shape-rendering="crispEdges"><path fill="#000000" d="M4 0h5v1h-5zM5 1h2v1h-2zM5 2h2v1h-2zM4 3h2v1h-2zM4 4h2v1h-2zM3 5h2v1h-2zM3 6h2v1h-2zM2 7h2v1h-2zM0 8h5v1h-5z"/></svg>
<svg class="a" style="left:378px;top:76px" width="9" height="11" viewBox="0 0 9 11" shape-rendering="crispEdges"><path fill="#000000" d="M0 0h4v1h-4zM5 0h4v1h-4zM1 1h2v1h-2zM6 1h2v1h-2zM1 2h2v1h-2zM6 2h2v1h-2zM1 3h2v1h-2zM6 3h2v1h-2zM1 4h2v1h-2zM6 4h2v1h-2zM1 5h2v1h-2zM6 5h2v1h-2zM1 6h2v1h-2zM6 6h2v1h-2zM1 7h3v1h-3zM5 7h3v1h-3zM2 8h5v1h-5zM0 10h9v1h-9z"/></svg>
<div class="a" style="left:405px;top:76px;width:14px;height:1px;background:#000;"></div>
<div class="a" style="left:405px;top:78px;width:10px;height:1px;background:#000;"></div>
<div class="a" style="left:405px;top:80px;width:14px;height:1px;background:#000;"></div>
<div class="a" style="left:405px;top:82px;width:10px;height:1px;background:#000;"></div>
<div class="a" style="left:405px;top:84px;width:14px;height:1px;background:#000;"></div>
<div class="a" style="left:405px;top:86px;width:10px;height:1px;background:#000;"></div>
<div class="a" style="left:427px;top:75px;width:14px;height:1px;background:#000;"></div>
<div class="a" style="left:450px;top:75px;width:14px;height:1px;background:#000;"></div>
<div class="a" style="left:473px;top:75px;width:14px;height:1px;background:#000;"></div>
<div class="a" style="left:429px;top:77px;width:10px;height:1px;background:#000;"></div>
<div class="a" style="left:454px;top:77px;width:10px;height:1px;background:#000;"></div>
<div class="a" style="left:473px;top:77px;width:14px;height:1px;background:#000;"></div>
<div class="a" style="left:427px;top:79px;width:14px;height:1px;background:#000;"></div>
<div class="a" style="left:450px;top:79px;width:14px;height:1px;background:#000;"></div>
<div class="a" style="left:473px;top:79px;width:14px;height:1px;background:#000;"></div>
<div class="a" style="left:429px;top:81px;width:10px;height:1px;background:#000;"></div>
<div class="a" style="left:454px;top:81px;width:10px;height:1px;background:#000;"></div>
<div class="a" style="left:473px;top:81px;width:14px;height:1px;background:#000;"></div>
<div class="a" style="left:427px;top:83px;width:14px;height:1px;background:#000;"></div>
<div class="a" style="left:450px;top:83px;width:14px;height:1px;background:#000;"></div>
<div class="a" style="left:473px;top:83px;width:14px;height:1px;background:#000;"></div>
<div class="a" style="left:429px;top:85px;width:10px;height:1px;background:#000;"></div>
<div class="a" style="left:454px;top:85px;width:10px;height:1px;background:#000;"></div>
<div class="a" style="left:473px;top:85px;width:14px;height:1px;background:#000;"></div>
<svg class="a" style="left:502px;top:74px" width="3" height="14" viewBox="0 0 3 14" shape-rendering="crispEdges"><path fill="#000080" d="M1 0h1v1h-1zM0 1h2v1h-2zM1 2h1v1h-1zM0 3h3v1h-3zM0 5h2v1h-2zM2 6h1v1h-1zM1 7h1v1h-1zM0 8h3v1h-3zM0 10h3v1h-3zM1 11h1v1h-1zM2 12h1v1h-1zM0 13h2v1h-2z"/></svg>
<div class="a" style="left:507px;top:75px;width:9px;height:1px;background:#000;"></div>
<div class="a" style="left:530px;top:75px;width:9px;height:1px;background:#000;"></div>
<div class="a" style="left:525px;top:74px;width:3px;height:3px;background:#000080;"></div>
<div class="a" style="left:507px;top:80px;width:9px;height:1px;background:#000;"></div>
<div class="a" style="left:530px;top:80px;width:9px;height:1px;background:#000;"></div>
<div class="a" style="left:525px;top:79px;width:3px;height:3px;background:#000080;"></div>
<div class="a" style="left:507px;top:85px;width:9px;height:1px;background:#000;"></div>
<div class="a" style="left:530px;top:85px;width:9px;height:1px;background:#000;"></div>
<div class="a" style="left:525px;top:84px;width:3px;height:3px;background:#000080;"></div>
<div class="a" style="left:555px;top:73px;width:1px;height:1px;background:#000;"></div>
<div class="a" style="left:555px;top:87px;width:1px;height:1px;background:#000;"></div>
<div class="a" style="left:550px;top:75px;width:4px;height:1px;background:#000;"></div>
<div class="a" style="left:555px;top:75px;width:9px;height:1px;background:#000;"></div>
<div class="a" style="left:550px;top:83px;width:4px;height:1px;background:#000;"></div>
<div class="a" style="left:555px;top:83px;width:9px;height:1px;background:#000;"></div>
<div class="a" style="left:550px;top:85px;width:4px;height:1px;background:#000;"></div>
<div class="a" style="left:555px;top:85px;width:2px;height:1px;background:#000;"></div>
<div class="a" style="left:555px;top:77px;width:9px;height:2px;background:#000;"></div>
<div class="a" style="left:555px;top:80px;width:6px;height:2px;background:#000;"></div>
<svg class="a" style="left:548px;top:77px" width="5" height="5" viewBox="0 0 5 5" shape-rendering="crispEdges"><path fill="#000080" d="M2 0h1v1h-1zM1 1h2v1h-2zM0 2h5v1h-5zM1 3h2v1h-2zM2 4h1v1h-1z"/></svg>
<div class="a" style="left:578px;top:73px;width:1px;height:1px;background:#000;"></div>
<div class="a" style="left:578px;top:87px;width:1px;height:1px;background:#000;"></div>
<div class="a" style="left:573px;top:75px;width:4px;height:1px;background:#000;"></div>
<div class="a" style="left:578px;top:75px;width:9px;height:1px;background:#000;"></div>
<div class="a" style="left:573px;top:83px;width:4px;height:1px;background:#000;"></div>
<div class="a" style="left:578px;top:83px;width:9px;height:1px;background:#000;"></div>
<div class="a" style="left:573px;top:85px;width:4px;height:1px;background:#000;"></div>
<div class="a" style="left:578px;top:85px;width:2px;height:1px;background:#000;"></div>
<div class="a" style="left:578px;top:77px;width:9px;height:2px;background:#000;"></div>
<div class="a" style="left:578px;top:80px;width:6px;height:2px;background:#000;"></div>
<svg class="a" style="left:571px;top:77px" width="5" height="5" viewBox="0 0 5 5" shape-rendering="crispEdges"><path fill="#000080" d="M2 0h1v1h-1zM2 1h2v1h-2zM0 2h5v1h-5zM2 3h2v1h-2zM2 4h1v1h-1z"/></svg>
<div class="a" style="left:602px;top:75px;width:13px;height:13px;background:transparent;border:1px solid #000"></div>
<div class="a" style="left:608px;top:77px;width:1px;height:1px;background:#808080;"></div>
<div class="a" style="left:608px;top:79px;width:1px;height:1px;background:#808080;"></div>
<div class="a" style="left:608px;top:81px;width:1px;height:1px;background:#808080;"></div>
<div class="a" style="left:608px;top:83px;width:1px;height:1px;background:#808080;"></div>
<div class="a" style="left:608px;top:85px;width:1px;height:1px;background:#808080;"></div>
<div class="a" style="left:604px;top:81px;width:1px;height:1px;background:#808080;"></div>
<div class="a" style="left:606px;top:81px;width:1px;height:1px;background:#808080;"></div>
<div class="a" style="left:610px;top:81px;width:1px;height:1px;background:#808080;"></div>
<div class="a" style="left:612px;top:81px;width:1px;height:1px;background:#808080;"></div>
<svg class="a" style="left:636px;top:74px" width="13" height="10" viewBox="0 0 13 10" shape-rendering="crispEdges"><path fill="#000000" d="M9 0h3v1h-3zM8 1h1v1h-1zM12 1h1v1h-1zM7 2h1v1h-1zM11 2h1v1h-1zM6 3h1v1h-1zM10 3h1v1h-1zM5 4h1v1h-1zM9 4h1v1h-1zM4 5h1v1h-1zM8 5h1v1h-1zM3 6h1v1h-1zM7 6h1v1h-1zM2 7h1v1h-1zM6 7h1v1h-1zM1 8h2v1h-2zM5 8h1v1h-1zM0 9h5v1h-5z"/><path fill="#ffffff" d="M9 1h1v1h-1zM8 2h1v1h-1zM7 3h1v1h-1zM9 3h1v1h-1zM6 4h3v1h-3zM6 5h2v1h-2zM4 6h1v1h-1zM3 7h3v1h-3zM3 8h2v1h-2z"/><path fill="#0000ff" d="M10 1h1v1h-1zM10 2h1v1h-1z"/><path fill="#000080" d="M11 1h1v1h-1zM5 5h1v1h-1zM5 6h2v1h-2z"/><path fill="#008000" d="M9 2h1v1h-1zM8 3h1v1h-1z"/></svg>
<svg class="a" style="left:668px;top:73px" width="13" height="11" viewBox="0 0 13 11" shape-rendering="crispEdges"><path fill="#000080" d="M6 0h1v1h-1zM5 1h3v1h-3zM5 2h3v1h-3zM4 3h1v1h-1zM6 3h3v1h-3zM4 4h1v1h-1zM6 4h3v1h-3zM3 5h1v1h-1zM7 5h3v1h-3zM3 6h7v1h-7zM2 7h1v1h-1zM8 7h3v1h-3zM2 8h1v1h-1zM8 8h3v1h-3zM1 9h2v1h-2zM8 9h3v1h-3zM0 10h4v1h-4zM7 10h6v1h-6z"/></svg>
<svg class="a" style="left:70px;top:577px" width="17" height="17" viewBox="0 0 17 17"><defs><linearGradient id="sd" x1="0" y1="0" x2="1" y2="1"><stop offset="0" stop-color="#6ab0f8"/><stop offset="1" stop-color="#1450c0"/></linearGradient></defs><rect x="1" y="1.300" width="14.500" height="14.700" rx="2" fill="url(#sd)"/><path d="M13 2.800C6 1.500 2.300 5 2.300 9.300c0 3.700 3.500 5.700 10 4.700l0.300-2.300c-4 0.600-6-0.300-6-2.500c0-2.800 2.300-4.300 6-3.800z" fill="#fff4c8"/><path d="M6 6l5-2.500l2.500 6l-5 2.500z" fill="#f4f8ff"/><path d="M7.300 7l3-1.500M8 8.800l3-1.500" stroke="#4a80e0" stroke-width="0.800"/><path d="M7.500 10.300l5.500-4.300" stroke="#7090d0" stroke-width="1.300"/><path d="M6.800 10.800l1.500-0.400" stroke="#202020" stroke-width="1.200"/><path d="M12.800 5.800l2.900-1.300l-0.700 2.700z" fill="#f06020"/></svg>
<svg class="a" style="left:93px;top:576.5px" width="18" height="19" viewBox="0 0 18 19"><g transform="translate(9 9.500) scale(1.130) translate(-9 -9)"><ellipse cx="9" cy="8.500" rx="9" ry="3.200" transform="rotate(-32 9 8.500)" fill="none" stroke="#68c0f8" stroke-width="1.200"/><path d="M4.200 9.600h9.600c0.400-4.200-2-6.400-5-6.400c-3.200 0-5.600 2.400-5.600 6c0 3.600 2.400 5.800 5.600 5.800c2.400 0 4-1 4.800-3h-3c-0.400 0.600-1 0.900-1.800 0.900c-1.400 0-2.300-0.900-2.500-2.400zM6.400 7.700c0.300-1.300 1.100-2 2.400-2c1.300 0 2.100 0.700 2.300 2z" fill="#2080e0"/><path d="M4.200 9.600h9.600c0.100-1-0.100-2-0.400-2.800l-9.800 1.200z" fill="#48b0f8" opacity="0.650"/><path d="M13.600 12c-0.800 2-2.400 3-4.800 3c-1.500 0-2.800-0.500-3.800-1.400c3 1.200 6.500 0.600 8.600-1.600z" fill="#1058b8"/></g></svg>
<svg class="a" style="left:116px;top:577px" width="17" height="17" viewBox="0 0 17 17"><circle cx="8.300" cy="8.300" r="7.600" fill="#606060" opacity="0.350" transform="translate(0.700 0.700)"/><path d="M8.300 8.300V0.800A7.500 7.500 0 0 0 0.800 8.300z" fill="#f04818"/><path d="M8.300 8.300H15.800A7.500 7.500 0 0 0 8.300 0.800z" fill="#58a818"/><path d="M8.300 8.300V15.800A7.500 7.500 0 0 0 15.800 8.300z" fill="#e8b418"/><path d="M8.300 8.300H0.800A7.500 7.500 0 0 0 8.300 15.800z" fill="#1868d8"/><circle cx="8.300" cy="8.300" r="4.300" fill="#f4f4f4"/><circle cx="8.300" cy="8.300" r="3.400" fill="#b8b8b8"/><path d="M6.300 5.300l5 3l-5 3z" fill="#181818"/></svg>
<svg class="a" style="left:141px;top:580px" width="15" height="14" viewBox="0 0 15 14" shape-rendering="crispEdges"><path fill="#000000" d="M2 0h7v1h-7zM1 1h1v1h-1zM10 1h1v1h-1zM0 2h1v1h-1zM12 2h1v1h-1zM14 2h1v1h-1zM0 3h1v1h-1zM14 3h1v1h-1zM0 4h1v1h-1zM3 4h4v1h-4zM14 4h1v1h-1zM0 5h4v1h-4zM6 5h5v1h-5zM14 5h1v1h-1zM0 6h2v1h-2zM5 6h1v1h-1zM10 6h2v1h-2zM13 6h2v1h-2zM0 7h1v1h-1zM3 7h1v1h-1zM13 7h2v1h-2zM13 8h1v1h-1zM0 9h12v1h-12zM13 9h2v1h-2zM0 10h1v1h-1zM3 10h11v1h-11zM0 11h1v1h-1zM3 11h1v1h-1zM9 11h1v1h-1zM11 11h1v1h-1zM13 11h2v1h-2zM1 12h8v1h-8zM10 12h1v1h-1zM12 12h1v1h-1zM9 13h1v1h-1zM12 13h1v1h-1z"/><path fill="#808000" d="M9 0h1v1h-1zM11 0h1v1h-1zM11 1h1v1h-1zM13 1h1v1h-1zM13 2h1v1h-1zM2 6h1v1h-1zM1 7h2v1h-2zM4 7h9v1h-9zM0 8h1v1h-1zM14 8h1v1h-1zM1 10h2v1h-2zM4 11h5v1h-5zM14 12h1v1h-1z"/><path fill="#ffff00" d="M10 0h1v1h-1zM12 1h1v1h-1zM3 6h2v1h-2zM1 8h12v1h-12zM1 11h2v1h-2z"/><path fill="#ffffff" d="M2 1h8v1h-8zM1 2h11v1h-11zM1 3h13v1h-13zM1 4h2v1h-2zM7 4h7v1h-7zM4 5h2v1h-2zM11 5h3v1h-3zM6 6h4v1h-4zM12 6h1v1h-1zM12 9h1v1h-1zM10 11h1v1h-1zM12 11h1v1h-1zM9 12h1v1h-1zM11 12h1v1h-1z"/></svg>
<svg class="a" style="left:162px;top:577px" width="18" height="18" viewBox="0 0 18 18"><circle cx="9" cy="9" r="8.300" fill="#e8f0f0" stroke="#101818" stroke-width="1"/><circle cx="9" cy="9" r="6.800" fill="#187878"/><path d="M2.400 11.500a6.800 6.800 0 0 0 13.200 0z" fill="#f8f8f8"/><path d="M3.500 13q5.500-2.200 11 0a6.800 6.800 0 0 1-11 0z" fill="#101010"/><path d="M4.200 14.200q4.800 1.200 9.600 0" stroke="#e0e0e0" stroke-width="0.800" fill="none"/><path d="M5 4.500h2.600l3.600 4.300v-3.300h-0.800v-1h2.800v1h-0.800v6h-1.200l-4.400-5.200v3.800h0.900v1h-2.900v-1h0.800v-4.600h-0.800z" fill="#fff"/></svg>
<svg class="a" style="left:185px;top:577px" width="19" height="18" viewBox="0 0 19 18"><rect x="3.500" y="2.500" width="10" height="13" fill="#6a94f4" stroke="#707880" stroke-width="1"/><path d="M7.200 4.500h3.600v1h-1v8h1v1h-3.600v-1h1v-8h-1z" fill="#303848"/><rect x="8.300" y="4" width="1.400" height="11" fill="#f8c898"/><ellipse cx="9.500" cy="8.500" rx="8.500" ry="2.300" transform="rotate(-27 9.500 8.500)" fill="none" stroke="#c81040" stroke-width="1.300" stroke-dasharray="22 9" stroke-dashoffset="-4"/></svg>
<svg class="a" style="left:209px;top:578px" width="16" height="16" viewBox="0 0 16 16" shape-rendering="crispEdges"><path fill="#0000ff" d="M0 0h5v1h-5zM11 0h3v1h-3zM0 1h2v1h-2zM4 1h1v1h-1zM7 1h2v1h-2zM12 1h2v1h-2zM0 2h2v1h-2zM4 2h1v1h-1zM7 2h2v1h-2zM12 2h2v1h-2zM0 3h2v1h-2zM4 3h1v1h-1zM7 3h2v1h-2zM12 3h2v1h-2zM0 4h5v1h-5zM11 4h3v1h-3zM0 5h14v1h-14zM0 6h2v1h-2zM12 6h2v1h-2zM0 7h2v1h-2zM12 7h2v1h-2zM0 8h2v1h-2zM12 8h2v1h-2zM0 9h2v1h-2zM12 9h2v1h-2zM0 10h2v1h-2zM12 10h2v1h-2zM0 11h2v1h-2zM12 11h2v1h-2zM0 12h2v1h-2zM12 12h1v1h-1zM0 13h2v1h-2zM12 13h2v1h-2zM0 14h2v1h-2zM12 14h2v1h-2z"/><path fill="#c0c0c0" d="M5 0h6v1h-6zM5 1h1v1h-1zM10 1h1v1h-1zM5 2h1v1h-1zM10 2h1v1h-1zM5 3h1v1h-1zM10 3h1v1h-1zM5 4h6v1h-6z"/><path fill="#000000" d="M2 1h2v1h-2zM11 1h1v1h-1zM14 1h1v1h-1zM2 2h2v1h-2zM11 2h1v1h-1zM14 2h2v1h-2zM2 3h2v1h-2zM11 3h1v1h-1zM14 3h2v1h-2zM14 4h2v1h-2zM14 5h2v1h-2zM2 6h10v1h-10zM14 6h2v1h-2zM14 7h2v1h-2zM14 8h2v1h-2zM14 9h2v1h-2zM14 10h2v1h-2zM14 11h2v1h-2zM14 12h2v1h-2zM14 13h2v1h-2zM14 14h2v1h-2zM1 15h15v1h-15z"/><path fill="#ffffff" d="M6 1h1v1h-1zM9 1h1v1h-1zM6 2h1v1h-1zM9 2h1v1h-1zM6 3h1v1h-1zM9 3h1v1h-1zM2 7h10v1h-10zM2 8h10v1h-10zM2 10h10v1h-10zM2 12h10v1h-10zM13 12h1v1h-1z"/><path fill="#ff0000" d="M2 9h10v1h-10zM2 11h10v1h-10zM2 13h10v1h-10zM2 14h10v1h-10z"/></svg>
<svg class="a" style="left:232px;top:578px" width="16" height="16" viewBox="0 0 16 16" shape-rendering="crispEdges"><path fill="#ffff00" d="M0 0h16v1h-16zM0 1h1v1h-1zM4 1h1v1h-1zM9 1h1v1h-1zM11 1h1v1h-1zM15 1h1v1h-1zM0 2h1v1h-1zM2 2h3v1h-3zM6 2h2v1h-2zM9 2h1v1h-1zM11 2h1v1h-1zM13 2h3v1h-3zM0 3h1v1h-1zM3 3h2v1h-2zM8 3h2v1h-2zM11 3h1v1h-1zM15 3h1v1h-1zM0 4h1v1h-1zM2 4h3v1h-3zM6 4h2v1h-2zM9 4h1v1h-1zM11 4h3v1h-3zM15 4h1v1h-1zM0 5h1v1h-1zM4 5h1v1h-1zM9 5h1v1h-1zM11 5h1v1h-1zM15 5h1v1h-1z"/><path fill="#4848c8" d="M1 1h3v1h-3zM5 1h4v1h-4zM10 1h1v1h-1zM12 1h3v1h-3zM1 2h1v1h-1zM5 2h1v1h-1zM8 2h1v1h-1zM10 2h1v1h-1zM12 2h1v1h-1zM1 3h2v1h-2zM5 3h3v1h-3zM10 3h1v1h-1zM12 3h3v1h-3zM1 4h1v1h-1zM5 4h1v1h-1zM8 4h1v1h-1zM10 4h1v1h-1zM14 4h1v1h-1zM1 5h3v1h-3zM5 5h4v1h-4zM10 5h1v1h-1zM12 5h3v1h-3z"/><path fill="#00ffff" d="M0 6h1v1h-1zM2 6h5v1h-5zM9 6h3v1h-3zM13 6h3v1h-3zM0 7h5v1h-5zM6 7h1v1h-1zM8 7h4v1h-4zM13 7h3v1h-3zM0 8h4v1h-4zM5 8h3v1h-3zM10 8h6v1h-6zM0 9h1v1h-1zM2 9h1v1h-1zM4 9h2v1h-2zM8 9h3v1h-3zM12 9h1v1h-1zM15 9h1v1h-1zM0 10h3v1h-3zM5 10h4v1h-4zM11 10h2v1h-2zM14 10h2v1h-2zM0 11h2v1h-2zM6 11h2v1h-2zM12 11h4v1h-4zM0 12h2v1h-2zM6 12h2v1h-2zM12 12h1v1h-1zM14 12h2v1h-2zM0 13h3v1h-3zM5 13h4v1h-4zM11 13h5v1h-5zM0 14h13v1h-13zM14 14h2v1h-2zM0 15h16v1h-16z"/><path fill="#008000" d="M1 6h1v1h-1zM12 6h1v1h-1zM5 7h1v1h-1zM7 7h1v1h-1zM12 7h1v1h-1zM4 8h1v1h-1zM8 8h2v1h-2zM1 9h1v1h-1zM3 9h1v1h-1zM6 9h2v1h-2zM11 9h1v1h-1zM13 9h2v1h-2zM13 10h1v1h-1zM13 12h1v1h-1zM13 14h1v1h-1z"/><path fill="#808000" d="M7 6h2v1h-2z"/><path fill="#ff0000" d="M3 10h2v1h-2zM9 10h2v1h-2zM2 11h4v1h-4zM8 11h4v1h-4zM2 12h4v1h-4zM8 12h4v1h-4zM3 13h2v1h-2zM9 13h2v1h-2z"/></svg>
<svg class="a" style="left:255px;top:578px" width="17" height="15" viewBox="0 0 17 15" shape-rendering="crispEdges"><path fill="#000000" d="M0 0h11v1h-11zM0 1h1v1h-1zM4 1h1v1h-1zM6 1h1v1h-1zM10 1h1v1h-1zM12 1h1v1h-1zM14 1h1v1h-1zM1 2h1v1h-1zM4 2h1v1h-1zM6 2h1v1h-1zM9 2h1v1h-1zM1 3h1v1h-1zM4 3h1v1h-1zM6 3h1v1h-1zM9 3h1v1h-1zM12 3h1v1h-1zM14 3h1v1h-1zM2 4h1v1h-1zM4 4h3v1h-3zM8 4h1v1h-1zM2 5h1v1h-1zM4 5h1v1h-1zM6 5h1v1h-1zM8 5h1v1h-1zM12 5h1v1h-1zM14 5h1v1h-1zM2 6h3v1h-3zM6 6h4v1h-4zM4 7h2v1h-2zM9 7h1v1h-1zM13 7h3v1h-3zM2 8h3v1h-3zM6 8h1v1h-1zM8 8h4v1h-4zM15 8h1v1h-1zM1 9h1v1h-1zM6 9h1v1h-1zM8 9h1v1h-1zM13 9h1v1h-1zM15 9h1v1h-1zM0 10h1v1h-1zM7 10h1v1h-1zM14 10h2v1h-2zM0 11h1v1h-1zM7 11h1v1h-1zM14 11h1v1h-1zM0 12h1v1h-1zM7 12h1v1h-1zM14 12h1v1h-1zM1 13h1v1h-1zM6 13h1v1h-1zM8 13h1v1h-1zM13 13h1v1h-1zM2 14h4v1h-4zM9 14h4v1h-4z"/><path fill="#00ffff" d="M1 1h3v1h-3zM5 1h1v1h-1zM7 1h3v1h-3zM2 2h2v1h-2zM5 2h1v1h-1zM7 2h2v1h-2zM2 3h2v1h-2zM5 3h1v1h-1zM7 3h2v1h-2zM3 4h1v1h-1zM7 4h1v1h-1zM3 5h1v1h-1zM7 5h1v1h-1zM2 9h3v1h-3zM9 9h3v1h-3zM1 10h3v1h-3zM8 10h3v1h-3zM1 11h2v1h-2zM8 11h2v1h-2zM1 12h1v1h-1zM8 12h1v1h-1z"/><path fill="#ffffff" d="M5 9h1v1h-1zM12 9h1v1h-1zM4 10h3v1h-3zM11 10h3v1h-3zM3 11h4v1h-4zM10 11h4v1h-4zM2 12h5v1h-5zM9 12h5v1h-5zM2 13h4v1h-4zM9 13h4v1h-4z"/></svg>
<svg class="a" style="left:279px;top:578px" width="15" height="15" viewBox="0 0 15 15"><path d="M2 1.200l1 0.300v2.500h-1z" fill="#707888"/><rect x="1.500" y="3.300" width="4" height="9.500" rx="1" fill="#9098a8" stroke="#687080" stroke-width="0.600"/><rect x="2.300" y="5" width="2.400" height="3" fill="#48e048"/><path d="M5.500 9.500l5-1.200l3.300 2l-5.500 2.500l-2.800-0.300z" fill="#a8b0d0"/><path d="M5.500 11.300l2.800 1.500l5.500-2.500v0.800l-5.500 2.400l-2.800-1.200z" fill="#6878a0"/><path d="M8.500 10.800l2-0.600" stroke="#d06040" stroke-width="0.900"/></svg>
<svg class="a" style="left:301px;top:578px" width="16" height="16" viewBox="0 0 16 16"><defs><radialGradient id="rs" cx="0.400" cy="0.350" r="0.750"><stop offset="0" stop-color="#ff3030"/><stop offset="0.700" stop-color="#e80808"/><stop offset="1" stop-color="#a80000"/></radialGradient></defs><rect x="0.500" y="0.500" width="15" height="15" fill="#fff" stroke="#000" stroke-width="1"/><circle cx="7.600" cy="8" r="6.300" fill="url(#rs)"/><path d="M5.800 2.500q-2.300 3.500-1.600 7h8.600" stroke="#fff" stroke-width="1.300" fill="none"/><path d="M7.200 2.800l-1 4.500M9 2.200l4.500 5M10.500 2l4 4M8.300 4l4.500 4.500" stroke="#fff" stroke-width="0.800" opacity="0.850"/><path d="M12.500 2.500l2.500 3.500" stroke="#fff" stroke-width="1.200"/></svg>
<svg class="a" style="left:325px;top:579px" width="14" height="15" viewBox="0 0 14 15" shape-rendering="crispEdges"><path fill="#505088" d="M0 0h12v1h-12zM0 1h1v1h-1zM12 1h1v1h-1zM0 2h1v1h-1zM12 2h1v1h-1zM0 3h1v1h-1zM12 3h1v1h-1zM0 4h1v1h-1zM12 4h1v1h-1zM0 5h1v1h-1zM12 5h1v1h-1zM0 6h1v1h-1zM12 6h1v1h-1zM0 7h1v1h-1zM12 7h1v1h-1zM0 8h1v1h-1zM12 8h1v1h-1zM0 9h1v1h-1zM12 9h1v1h-1zM0 10h1v1h-1zM12 10h1v1h-1zM0 11h1v1h-1zM12 11h1v1h-1zM0 12h1v1h-1zM12 12h1v1h-1zM0 13h1v1h-1zM12 13h1v1h-1z"/><path fill="#000000" d="M12 0h2v1h-2zM13 1h1v1h-1zM4 2h4v1h-4zM13 2h1v1h-1zM3 3h1v1h-1zM7 3h2v1h-2zM13 3h1v1h-1zM3 4h1v1h-1zM7 4h2v1h-2zM13 4h1v1h-1zM4 5h4v1h-4zM13 5h1v1h-1zM13 6h1v1h-1zM2 7h6v1h-6zM13 7h1v1h-1zM4 8h4v1h-4zM13 8h1v1h-1zM4 9h4v1h-4zM13 9h1v1h-1zM4 10h4v1h-4zM13 10h1v1h-1zM2 11h8v1h-8zM13 11h1v1h-1zM2 12h8v1h-8zM13 12h1v1h-1zM13 13h1v1h-1zM0 14h14v1h-14z"/><path fill="#a8d8d8" d="M1 1h1v1h-1zM3 1h1v1h-1zM5 1h1v1h-1zM7 1h1v1h-1zM9 1h1v1h-1zM11 1h1v1h-1zM2 2h1v1h-1zM8 2h1v1h-1zM10 2h1v1h-1zM1 3h1v1h-1zM10 3h1v1h-1zM2 4h1v1h-1zM9 4h1v1h-1zM11 4h1v1h-1zM1 5h1v1h-1zM3 5h1v1h-1zM8 5h1v1h-1zM10 5h1v1h-1zM2 6h1v1h-1zM4 6h1v1h-1zM6 6h1v1h-1zM8 6h1v1h-1zM10 6h1v1h-1zM1 7h1v1h-1zM9 7h1v1h-1zM11 7h1v1h-1zM2 8h1v1h-1zM8 8h1v1h-1zM10 8h1v1h-1zM1 9h1v1h-1zM3 9h1v1h-1zM9 9h1v1h-1zM11 9h1v1h-1zM2 10h1v1h-1zM8 10h1v1h-1zM10 10h1v1h-1zM1 11h1v1h-1zM11 11h1v1h-1zM10 12h1v1h-1zM1 13h1v1h-1zM3 13h1v1h-1zM5 13h1v1h-1zM7 13h1v1h-1zM9 13h1v1h-1zM11 13h1v1h-1z"/><path fill="#c8c8e8" d="M2 1h1v1h-1zM4 1h1v1h-1zM6 1h1v1h-1zM8 1h1v1h-1zM10 1h1v1h-1zM1 2h1v1h-1zM3 2h1v1h-1zM9 2h1v1h-1zM11 2h1v1h-1zM2 3h1v1h-1zM5 3h1v1h-1zM9 3h1v1h-1zM11 3h1v1h-1zM1 4h1v1h-1zM4 4h1v1h-1zM6 4h1v1h-1zM10 4h1v1h-1zM2 5h1v1h-1zM9 5h1v1h-1zM11 5h1v1h-1zM1 6h1v1h-1zM3 6h1v1h-1zM5 6h1v1h-1zM7 6h1v1h-1zM9 6h1v1h-1zM11 6h1v1h-1zM8 7h1v1h-1zM10 7h1v1h-1zM1 8h1v1h-1zM3 8h1v1h-1zM9 8h1v1h-1zM11 8h1v1h-1zM2 9h1v1h-1zM8 9h1v1h-1zM10 9h1v1h-1zM1 10h1v1h-1zM3 10h1v1h-1zM9 10h1v1h-1zM11 10h1v1h-1zM10 11h1v1h-1zM1 12h1v1h-1zM11 12h1v1h-1zM2 13h1v1h-1zM4 13h1v1h-1zM6 13h1v1h-1zM8 13h1v1h-1zM10 13h1v1h-1z"/><path fill="#ffffff" d="M4 3h1v1h-1zM6 3h1v1h-1zM5 4h1v1h-1z"/></svg>
<svg class="a" style="left:347px;top:578px" width="16" height="16" viewBox="0 0 16 16"><defs><linearGradient id="qt" x1="0" y1="0" x2="0" y2="1"><stop offset="0" stop-color="#f4f4f4"/><stop offset="1" stop-color="#d0d0d0"/></linearGradient></defs><rect x="0.700" y="0.700" width="14.600" height="14.600" rx="1.500" fill="url(#qt)" stroke="#484858" stroke-width="1.400"/><path d="M1.500 12h13" stroke="#a8b098" stroke-width="0.800"/><path d="M1.500 14.200h13" stroke="#303038" stroke-width="1.200"/><circle cx="7.700" cy="7" r="3.100" fill="#e8f4ff" stroke="#2080e0" stroke-width="1.900"/><path d="M8.500 8.500l2.300 2.300" stroke="#2080e0" stroke-width="1.800"/><path d="M7.700 7l1.200-1.200" stroke="#2080e0" stroke-width="0.700"/></svg>
<svg class="a" style="left:370px;top:578px" width="17" height="16" viewBox="0 0 17 16"><path d="M0.800 3.500q0-1.500 1.500-1.500h3l1.500 1.500h5.500q1 0 1 1v1.500h-12.500z" fill="#e8b030" stroke="#b88010" stroke-width="0.800"/><path d="M0.800 5.500h12.500v6.500q0 1-1 1h-10.500q-1 0-1-1z" fill="#f8d870" stroke="#c89018" stroke-width="0.800"/><path d="M9.500 5.500l6-0.500l-1.500 8.500l-3.500-1.500z" fill="#f0b838" stroke="#c08010" stroke-width="0.600"/><circle cx="6.300" cy="7.500" r="3.200" fill="#c8ecff" stroke="#e8f4ff" stroke-width="0.900"/><path d="M8.800 10l3 3.200" stroke="#c8a080" stroke-width="1.600"/><path d="M11 12.300l1.200 1.300" stroke="#8060a0" stroke-width="1.400"/></svg>
<svg class="a" style="left:393px;top:578px" width="16" height="16" viewBox="0 0 16 16" shape-rendering="crispEdges"><path fill="#008000" d="M0 0h1v1h-1zM2 0h1v1h-1zM4 0h1v1h-1zM6 0h1v1h-1zM8 0h1v1h-1zM10 0h1v1h-1zM12 0h1v1h-1zM14 0h1v1h-1zM1 1h1v1h-1zM3 1h1v1h-1zM5 1h1v1h-1zM7 1h1v1h-1zM9 1h1v1h-1zM11 1h1v1h-1zM13 1h1v1h-1zM15 1h1v1h-1zM0 2h1v1h-1zM14 2h1v1h-1zM1 3h1v1h-1zM3 3h1v1h-1zM5 3h1v1h-1zM11 3h1v1h-1zM15 3h1v1h-1zM0 4h1v1h-1zM6 4h1v1h-1zM10 4h1v1h-1zM12 4h1v1h-1zM14 4h1v1h-1zM1 5h1v1h-1zM4 5h1v1h-1zM6 5h1v1h-1zM8 5h1v1h-1zM10 5h1v1h-1zM15 5h1v1h-1zM0 6h1v1h-1zM5 6h1v1h-1zM7 6h1v1h-1zM9 6h1v1h-1zM14 6h1v1h-1zM1 7h1v1h-1zM5 7h1v1h-1zM8 7h1v1h-1zM15 7h1v1h-1zM0 8h1v1h-1zM4 8h1v1h-1zM6 8h1v1h-1zM9 8h1v1h-1zM14 8h1v1h-1zM1 9h1v1h-1zM3 9h1v1h-1zM5 9h1v1h-1zM7 9h1v1h-1zM10 9h1v1h-1zM12 9h1v1h-1zM15 9h1v1h-1zM0 10h1v1h-1zM4 10h1v1h-1zM6 10h1v1h-1zM9 10h1v1h-1zM11 10h1v1h-1zM13 10h2v1h-2zM1 11h1v1h-1zM3 11h1v1h-1zM5 11h1v1h-1zM10 11h1v1h-1zM12 11h2v1h-2zM15 11h1v1h-1zM0 12h1v1h-1zM14 12h1v1h-1zM1 13h1v1h-1zM15 13h1v1h-1zM0 14h1v1h-1zM2 14h1v1h-1zM4 14h1v1h-1zM6 14h1v1h-1zM8 14h1v1h-1zM10 14h1v1h-1zM12 14h1v1h-1zM14 14h1v1h-1zM1 15h1v1h-1zM3 15h1v1h-1zM5 15h1v1h-1zM7 15h1v1h-1zM9 15h1v1h-1zM11 15h1v1h-1zM13 15h1v1h-1zM15 15h1v1h-1z"/><path fill="#2a6a2a" d="M1 0h1v1h-1zM3 0h1v1h-1zM5 0h1v1h-1zM7 0h1v1h-1zM9 0h1v1h-1zM11 0h1v1h-1zM13 0h1v1h-1zM15 0h1v1h-1zM0 1h1v1h-1zM2 1h1v1h-1zM4 1h1v1h-1zM6 1h1v1h-1zM8 1h1v1h-1zM10 1h1v1h-1zM12 1h1v1h-1zM14 1h1v1h-1zM1 2h1v1h-1zM15 2h1v1h-1zM0 3h1v1h-1zM4 3h1v1h-1zM10 3h1v1h-1zM12 3h1v1h-1zM14 3h1v1h-1zM1 4h1v1h-1zM3 4h1v1h-1zM5 4h1v1h-1zM9 4h1v1h-1zM11 4h1v1h-1zM15 4h1v1h-1zM0 5h1v1h-1zM7 5h1v1h-1zM9 5h1v1h-1zM11 5h1v1h-1zM14 5h1v1h-1zM1 6h1v1h-1zM8 6h1v1h-1zM10 6h1v1h-1zM15 6h1v1h-1zM0 7h1v1h-1zM6 7h1v1h-1zM9 7h1v1h-1zM14 7h1v1h-1zM1 8h1v1h-1zM5 8h1v1h-1zM7 8h1v1h-1zM10 8h1v1h-1zM15 8h1v1h-1zM0 9h1v1h-1zM4 9h1v1h-1zM6 9h1v1h-1zM8 9h1v1h-1zM11 9h1v1h-1zM14 9h1v1h-1zM1 10h1v1h-1zM3 10h1v1h-1zM5 10h1v1h-1zM12 10h1v1h-1zM15 10h1v1h-1zM0 11h1v1h-1zM4 11h1v1h-1zM11 11h1v1h-1zM14 11h1v1h-1zM1 12h1v1h-1zM15 12h1v1h-1zM0 13h1v1h-1zM14 13h1v1h-1zM1 14h1v1h-1zM3 14h1v1h-1zM5 14h1v1h-1zM7 14h1v1h-1zM9 14h1v1h-1zM11 14h1v1h-1zM13 14h1v1h-1zM15 14h1v1h-1zM0 15h1v1h-1zM2 15h1v1h-1zM4 15h1v1h-1zM6 15h1v1h-1zM8 15h1v1h-1zM10 15h1v1h-1zM12 15h1v1h-1zM14 15h1v1h-1z"/><path fill="#ffffff" d="M2 2h12v1h-12zM2 3h1v1h-1zM6 3h4v1h-4zM13 3h1v1h-1zM2 4h1v1h-1zM4 4h1v1h-1zM7 4h2v1h-2zM13 4h1v1h-1zM2 5h2v1h-2zM5 5h1v1h-1zM12 5h2v1h-2zM2 6h3v1h-3zM6 6h1v1h-1zM11 6h3v1h-3zM2 7h3v1h-3zM7 7h1v1h-1zM10 7h4v1h-4zM2 8h2v1h-2zM8 8h1v1h-1zM11 8h3v1h-3zM2 9h1v1h-1zM9 9h1v1h-1zM13 9h1v1h-1zM2 10h1v1h-1zM7 10h2v1h-2zM10 10h1v1h-1zM2 11h1v1h-1zM6 11h4v1h-4zM2 12h12v1h-12zM2 13h12v1h-12z"/></svg>
<svg class="a" style="left:416px;top:578px" width="16" height="16" viewBox="0 0 16 16"><rect width="16" height="16" fill="#808000"/><rect x="2" y="2" width="12" height="12" fill="#fff"/><circle cx="8" cy="8" r="5.300" fill="#fff" stroke="#808000" stroke-width="2.200"/><path d="M7.500 4.800v4h3.500" stroke="#808000" stroke-width="1.400" fill="none"/></svg>
<svg class="a" style="left:439px;top:578px" width="16" height="16" viewBox="0 0 16 16" shape-rendering="crispEdges"><path fill="#ff0000" d="M0 0h1v1h-1zM2 0h1v1h-1zM4 0h1v1h-1zM6 0h1v1h-1zM8 0h1v1h-1zM10 0h1v1h-1zM12 0h1v1h-1zM14 0h1v1h-1zM1 1h1v1h-1zM3 1h1v1h-1zM5 1h1v1h-1zM7 1h1v1h-1zM9 1h1v1h-1zM11 1h1v1h-1zM13 1h1v1h-1zM15 1h1v1h-1zM0 2h1v1h-1zM14 2h1v1h-1zM1 3h1v1h-1zM3 3h1v1h-1zM5 3h1v1h-1zM7 3h1v1h-1zM9 3h1v1h-1zM11 3h1v1h-1zM15 3h1v1h-1zM0 4h1v1h-1zM4 4h1v1h-1zM6 4h1v1h-1zM8 4h1v1h-1zM12 4h1v1h-1zM14 4h1v1h-1zM1 5h1v1h-1zM3 5h1v1h-1zM5 5h1v1h-1zM7 5h1v1h-1zM9 5h1v1h-1zM11 5h1v1h-1zM15 5h1v1h-1zM0 6h1v1h-1zM4 6h1v1h-1zM8 6h1v1h-1zM12 6h1v1h-1zM14 6h1v1h-1zM1 7h1v1h-1zM3 7h1v1h-1zM7 7h1v1h-1zM9 7h1v1h-1zM11 7h1v1h-1zM15 7h1v1h-1zM0 8h1v1h-1zM8 8h1v1h-1zM10 8h1v1h-1zM12 8h1v1h-1zM14 8h1v1h-1zM1 9h1v1h-1zM3 9h1v1h-1zM11 9h1v1h-1zM15 9h1v1h-1zM0 10h1v1h-1zM4 10h1v1h-1zM10 10h1v1h-1zM12 10h1v1h-1zM14 10h1v1h-1zM1 11h1v1h-1zM3 11h1v1h-1zM5 11h1v1h-1zM7 11h1v1h-1zM9 11h1v1h-1zM11 11h1v1h-1zM15 11h1v1h-1zM0 12h1v1h-1zM4 12h1v1h-1zM6 12h1v1h-1zM8 12h1v1h-1zM10 12h1v1h-1zM12 12h1v1h-1zM14 12h1v1h-1zM1 13h1v1h-1zM15 13h1v1h-1zM0 14h1v1h-1zM2 14h1v1h-1zM4 14h1v1h-1zM6 14h1v1h-1zM8 14h1v1h-1zM10 14h1v1h-1zM12 14h1v1h-1zM14 14h1v1h-1zM1 15h1v1h-1zM3 15h1v1h-1zM5 15h1v1h-1zM7 15h1v1h-1zM9 15h1v1h-1zM11 15h1v1h-1zM13 15h1v1h-1zM15 15h1v1h-1z"/><path fill="#808000" d="M1 0h1v1h-1zM3 0h1v1h-1zM5 0h1v1h-1zM7 0h1v1h-1zM9 0h1v1h-1zM11 0h1v1h-1zM13 0h1v1h-1zM15 0h1v1h-1zM0 1h1v1h-1zM2 1h1v1h-1zM4 1h1v1h-1zM6 1h1v1h-1zM8 1h1v1h-1zM10 1h1v1h-1zM12 1h1v1h-1zM14 1h1v1h-1zM1 2h1v1h-1zM15 2h1v1h-1zM0 3h1v1h-1zM4 3h1v1h-1zM6 3h1v1h-1zM8 3h1v1h-1zM10 3h1v1h-1zM12 3h1v1h-1zM14 3h1v1h-1zM1 4h1v1h-1zM3 4h1v1h-1zM5 4h1v1h-1zM7 4h1v1h-1zM15 4h1v1h-1zM0 5h1v1h-1zM4 5h1v1h-1zM8 5h1v1h-1zM10 5h1v1h-1zM12 5h1v1h-1zM14 5h1v1h-1zM1 6h1v1h-1zM3 6h1v1h-1zM7 6h1v1h-1zM15 6h1v1h-1zM0 7h1v1h-1zM8 7h1v1h-1zM10 7h1v1h-1zM12 7h1v1h-1zM14 7h1v1h-1zM1 8h1v1h-1zM3 8h1v1h-1zM9 8h1v1h-1zM11 8h1v1h-1zM15 8h1v1h-1zM0 9h1v1h-1zM12 9h1v1h-1zM14 9h1v1h-1zM1 10h1v1h-1zM3 10h1v1h-1zM11 10h1v1h-1zM15 10h1v1h-1zM0 11h1v1h-1zM4 11h1v1h-1zM6 11h1v1h-1zM8 11h1v1h-1zM10 11h1v1h-1zM12 11h1v1h-1zM14 11h1v1h-1zM1 12h1v1h-1zM3 12h1v1h-1zM5 12h1v1h-1zM7 12h1v1h-1zM9 12h1v1h-1zM11 12h1v1h-1zM15 12h1v1h-1zM0 13h1v1h-1zM14 13h1v1h-1zM1 14h1v1h-1zM3 14h1v1h-1zM5 14h1v1h-1zM7 14h1v1h-1zM9 14h1v1h-1zM11 14h1v1h-1zM13 14h1v1h-1zM15 14h1v1h-1zM0 15h1v1h-1zM2 15h1v1h-1zM4 15h1v1h-1zM6 15h1v1h-1zM8 15h1v1h-1zM10 15h1v1h-1zM12 15h1v1h-1zM14 15h1v1h-1z"/><path fill="#ffffff" d="M2 2h12v1h-12zM2 3h1v1h-1zM13 3h1v1h-1zM2 4h1v1h-1zM9 4h3v1h-3zM13 4h1v1h-1zM2 5h1v1h-1zM6 5h1v1h-1zM13 5h1v1h-1zM2 6h1v1h-1zM5 6h2v1h-2zM9 6h3v1h-3zM13 6h1v1h-1zM2 7h1v1h-1zM4 7h3v1h-3zM13 7h1v1h-1zM2 8h1v1h-1zM4 8h4v1h-4zM13 8h1v1h-1zM2 9h1v1h-1zM4 9h7v1h-7zM13 9h1v1h-1zM2 10h1v1h-1zM5 10h5v1h-5zM13 10h1v1h-1zM2 11h1v1h-1zM13 11h1v1h-1zM2 12h1v1h-1zM13 12h1v1h-1zM2 13h12v1h-12z"/></svg>
<svg class="a" style="left:462px;top:578px" width="16" height="16" viewBox="0 0 16 16" shape-rendering="crispEdges"><path fill="#0000ff" d="M0 0h1v1h-1zM2 0h1v1h-1zM4 0h1v1h-1zM6 0h1v1h-1zM8 0h1v1h-1zM10 0h1v1h-1zM12 0h1v1h-1zM14 0h1v1h-1zM1 1h1v1h-1zM3 1h1v1h-1zM5 1h1v1h-1zM7 1h1v1h-1zM9 1h1v1h-1zM11 1h1v1h-1zM13 1h1v1h-1zM15 1h1v1h-1zM0 2h1v1h-1zM14 2h1v1h-1zM1 3h1v1h-1zM15 3h1v1h-1zM0 4h1v1h-1zM2 4h1v1h-1zM4 4h1v1h-1zM6 4h1v1h-1zM8 4h1v1h-1zM10 4h1v1h-1zM12 4h1v1h-1zM14 4h1v1h-1zM1 5h1v1h-1zM3 5h1v1h-1zM7 5h1v1h-1zM11 5h1v1h-1zM13 5h1v1h-1zM15 5h1v1h-1zM0 6h1v1h-1zM4 6h1v1h-1zM6 6h1v1h-1zM8 6h1v1h-1zM10 6h1v1h-1zM12 6h1v1h-1zM14 6h1v1h-1zM1 7h1v1h-1zM3 7h1v1h-1zM7 7h1v1h-1zM11 7h1v1h-1zM15 7h1v1h-1zM0 8h1v1h-1zM4 8h1v1h-1zM6 8h1v1h-1zM8 8h1v1h-1zM10 8h1v1h-1zM14 8h1v1h-1zM1 9h1v1h-1zM3 9h1v1h-1zM5 9h1v1h-1zM9 9h1v1h-1zM15 9h1v1h-1zM0 10h1v1h-1zM4 10h1v1h-1zM6 10h1v1h-1zM8 10h1v1h-1zM10 10h1v1h-1zM14 10h1v1h-1zM1 11h1v1h-1zM3 11h1v1h-1zM5 11h1v1h-1zM9 11h1v1h-1zM15 11h1v1h-1zM0 12h1v1h-1zM14 12h1v1h-1zM1 13h1v1h-1zM15 13h1v1h-1zM0 14h1v1h-1zM2 14h1v1h-1zM4 14h1v1h-1zM6 14h1v1h-1zM8 14h1v1h-1zM10 14h1v1h-1zM12 14h1v1h-1zM14 14h1v1h-1zM1 15h1v1h-1zM3 15h1v1h-1zM5 15h1v1h-1zM7 15h1v1h-1zM9 15h1v1h-1zM11 15h1v1h-1zM13 15h1v1h-1zM15 15h1v1h-1z"/><path fill="#000000" d="M1 0h1v1h-1zM3 0h1v1h-1zM5 0h1v1h-1zM7 0h1v1h-1zM9 0h1v1h-1zM11 0h1v1h-1zM13 0h1v1h-1zM15 0h1v1h-1zM0 1h1v1h-1zM2 1h1v1h-1zM4 1h1v1h-1zM6 1h1v1h-1zM8 1h1v1h-1zM10 1h1v1h-1zM12 1h1v1h-1zM14 1h1v1h-1zM1 2h1v1h-1zM15 2h1v1h-1zM0 3h1v1h-1zM14 3h1v1h-1zM1 4h1v1h-1zM3 4h1v1h-1zM5 4h1v1h-1zM7 4h1v1h-1zM9 4h1v1h-1zM11 4h1v1h-1zM13 4h1v1h-1zM15 4h1v1h-1zM0 5h1v1h-1zM2 5h1v1h-1zM4 5h1v1h-1zM6 5h1v1h-1zM8 5h1v1h-1zM10 5h1v1h-1zM12 5h1v1h-1zM14 5h1v1h-1zM1 6h1v1h-1zM3 6h1v1h-1zM7 6h1v1h-1zM11 6h1v1h-1zM15 6h1v1h-1zM0 7h1v1h-1zM4 7h1v1h-1zM6 7h1v1h-1zM8 7h1v1h-1zM10 7h1v1h-1zM14 7h1v1h-1zM1 8h1v1h-1zM3 8h1v1h-1zM5 8h1v1h-1zM7 8h1v1h-1zM9 8h1v1h-1zM11 8h1v1h-1zM15 8h1v1h-1zM0 9h1v1h-1zM4 9h1v1h-1zM6 9h1v1h-1zM8 9h1v1h-1zM10 9h1v1h-1zM14 9h1v1h-1zM1 10h1v1h-1zM3 10h1v1h-1zM5 10h1v1h-1zM9 10h1v1h-1zM15 10h1v1h-1zM0 11h1v1h-1zM4 11h1v1h-1zM6 11h1v1h-1zM8 11h1v1h-1zM14 11h1v1h-1zM1 12h1v1h-1zM15 12h1v1h-1zM0 13h1v1h-1zM14 13h1v1h-1zM1 14h1v1h-1zM3 14h1v1h-1zM5 14h1v1h-1zM7 14h1v1h-1zM9 14h1v1h-1zM11 14h1v1h-1zM13 14h1v1h-1zM15 14h1v1h-1zM0 15h1v1h-1zM2 15h1v1h-1zM4 15h1v1h-1zM6 15h1v1h-1zM8 15h1v1h-1zM10 15h1v1h-1zM12 15h1v1h-1zM14 15h1v1h-1z"/><path fill="#ffffff" d="M2 2h12v1h-12zM2 3h12v1h-12zM5 5h1v1h-1zM9 5h1v1h-1zM2 6h1v1h-1zM5 6h1v1h-1zM9 6h1v1h-1zM13 6h1v1h-1zM2 7h1v1h-1zM5 7h1v1h-1zM9 7h1v1h-1zM12 7h2v1h-2zM2 8h1v1h-1zM12 8h2v1h-2zM2 9h1v1h-1zM7 9h1v1h-1zM11 9h3v1h-3zM2 10h1v1h-1zM7 10h1v1h-1zM11 10h3v1h-3zM2 11h1v1h-1zM7 11h1v1h-1zM10 11h4v1h-4zM2 12h12v1h-12zM2 13h12v1h-12z"/></svg>
<svg class="a" style="left:533px;top:578px" width="18" height="16" viewBox="0 0 18 16" shape-rendering="crispEdges"><path fill="#f0ecd8" d="M4 0h10v1h-10zM4 1h1v1h-1zM4 12h1v1h-1zM4 13h1v1h-1zM4 14h1v1h-1zM4 15h1v1h-1z"/><path fill="#ffffff" d="M5 1h8v1h-8zM11 2h2v1h-2zM14 2h1v1h-1zM2 3h8v1h-8zM11 3h2v1h-2zM11 4h5v1h-5zM2 5h1v1h-1zM5 5h1v1h-1zM9 5h1v1h-1zM14 5h2v1h-2zM2 6h1v1h-1zM5 6h1v1h-1zM9 6h1v1h-1zM11 6h5v1h-5zM3 7h1v1h-1zM5 7h1v1h-1zM7 7h1v1h-1zM14 7h2v1h-2zM3 8h1v1h-1zM5 8h1v1h-1zM7 8h1v1h-1zM11 8h5v1h-5zM4 9h1v1h-1zM6 9h1v1h-1zM14 9h2v1h-2zM2 10h8v1h-8zM11 10h5v1h-5zM11 11h5v1h-5zM5 12h11v1h-11zM5 13h11v1h-11zM5 14h11v1h-11z"/><path fill="#000000" d="M13 1h2v1h-2zM1 2h1v1h-1zM3 2h1v1h-1zM5 2h1v1h-1zM7 2h1v1h-1zM9 2h1v1h-1zM13 2h1v1h-1zM15 2h1v1h-1zM13 3h4v1h-4zM1 4h1v1h-1zM3 4h1v1h-1zM5 4h1v1h-1zM7 4h1v1h-1zM9 4h2v1h-2zM16 4h1v1h-1zM4 5h1v1h-1zM7 5h1v1h-1zM16 5h1v1h-1zM1 6h1v1h-1zM3 6h1v1h-1zM6 6h1v1h-1zM8 6h1v1h-1zM10 6h1v1h-1zM16 6h1v1h-1zM2 7h1v1h-1zM8 7h1v1h-1zM10 7h1v1h-1zM16 7h1v1h-1zM1 8h1v1h-1zM4 8h1v1h-1zM6 8h1v1h-1zM9 8h1v1h-1zM16 8h1v1h-1zM2 9h1v1h-1zM8 9h1v1h-1zM10 9h1v1h-1zM16 9h1v1h-1zM1 10h1v1h-1zM16 10h1v1h-1zM2 11h1v1h-1zM4 11h1v1h-1zM6 11h1v1h-1zM8 11h1v1h-1zM10 11h1v1h-1zM16 11h1v1h-1zM16 12h1v1h-1zM16 13h1v1h-1zM16 14h1v1h-1zM5 15h12v1h-12z"/><path fill="#0000ff" d="M2 2h1v1h-1zM4 2h1v1h-1zM6 2h1v1h-1zM8 2h1v1h-1zM10 2h1v1h-1zM1 3h1v1h-1zM10 3h1v1h-1zM2 4h1v1h-1zM4 4h1v1h-1zM6 4h1v1h-1zM8 4h1v1h-1zM1 5h1v1h-1zM3 5h1v1h-1zM6 5h1v1h-1zM8 5h1v1h-1zM10 5h1v1h-1zM4 6h1v1h-1zM7 6h1v1h-1zM1 7h1v1h-1zM4 7h1v1h-1zM6 7h1v1h-1zM9 7h1v1h-1zM2 8h1v1h-1zM8 8h1v1h-1zM10 8h1v1h-1zM1 9h1v1h-1zM3 9h1v1h-1zM5 9h1v1h-1zM7 9h1v1h-1zM9 9h1v1h-1zM10 10h1v1h-1zM1 11h1v1h-1zM3 11h1v1h-1zM5 11h1v1h-1zM7 11h1v1h-1zM9 11h1v1h-1z"/><path fill="#c0c0c0" d="M11 5h3v1h-3zM11 7h3v1h-3zM11 9h3v1h-3z"/></svg>
<svg class="a" style="left:568px;top:554px" width="21" height="13" viewBox="0 0 21 13" shape-rendering="crispEdges"><path fill="#000000" d="M3 0h5v1h-5zM2 1h1v1h-1zM8 1h1v1h-1zM10 1h5v1h-5zM0 2h1v1h-1zM2 2h1v1h-1zM8 2h2v1h-2zM14 2h1v1h-1zM0 3h1v1h-1zM2 3h1v1h-1zM8 3h1v1h-1zM14 3h1v1h-1zM0 4h1v1h-1zM2 4h1v1h-1zM8 4h1v1h-1zM15 4h1v1h-1zM0 5h1v1h-1zM2 5h1v1h-1zM8 5h1v1h-1zM0 6h1v1h-1zM2 6h1v1h-1zM8 6h1v1h-1zM14 6h1v1h-1zM0 7h1v1h-1zM2 7h1v1h-1zM8 7h1v1h-1zM0 8h1v1h-1zM2 8h2v1h-2zM8 8h1v1h-1zM14 8h1v1h-1zM0 9h1v1h-1zM4 9h7v1h-7zM13 9h2v1h-2zM0 10h10v1h-10zM12 10h3v1h-3zM1 11h8v1h-8zM10 11h5v1h-5zM2 12h6v1h-6zM11 12h3v1h-3z"/><path fill="#ffffff" d="M3 1h5v1h-5zM3 2h1v1h-1zM7 2h1v1h-1zM10 2h4v1h-4zM3 3h5v1h-5zM9 3h1v1h-1zM3 4h1v1h-1zM7 4h1v1h-1zM9 4h4v1h-4zM3 5h5v1h-5zM9 5h1v1h-1zM13 5h1v1h-1zM3 6h1v1h-1zM7 6h1v1h-1zM9 6h5v1h-5zM3 7h5v1h-5zM9 7h1v1h-1zM12 7h1v1h-1zM4 8h4v1h-4zM9 8h3v1h-3z"/><path fill="#c0c0c0" d="M4 2h3v1h-3zM10 3h3v1h-3zM4 4h3v1h-3zM10 5h3v1h-3zM4 6h3v1h-3zM10 7h2v1h-2z"/><path fill="#a00000" d="M19 2h1v1h-1zM13 3h1v1h-1zM18 3h2v1h-2zM13 4h2v1h-2zM17 4h2v1h-2zM14 5h4v1h-4zM15 6h2v1h-2zM13 7h5v1h-5zM12 8h2v1h-2zM16 8h2v1h-2zM11 9h2v1h-2zM17 9h2v1h-2zM10 10h2v1h-2zM18 10h1v1h-1z"/></svg>
<svg class="a" style="left:4px;top:576px" width="16" height="16" viewBox="0 0 16 16"><path d="M2.200 2.300q2.500-1.600 5.200-0.200l-1.300 5.200q-2.600-1.300-5.200 0.200z" fill="#f05a18"/><path d="M8.200 2.600q2.800 1.500 5.600 0l-1.300 5.300q-2.800 1.400-5.600 0z" fill="#68c020"/><path d="M0.700 8.400q2.600-1.600 5.200-0.200l-1.300 5.200q-2.600-1.400-5.200 0.200z" fill="#2870e8" transform="translate(0.300 0)"/><path d="M6.700 8.700q2.800 1.500 5.600 0l-1.300 5.200q-2.800 1.500-5.600 0z" fill="#f8c818"/></svg>
<svg class="a" style="left:635px;top:578px" width="9" height="16" viewBox="0 0 9 16" shape-rendering="crispEdges"><path fill="#c40000" d="M2 0h5v1h-5zM1 1h2v1h-2zM6 1h2v1h-2zM0 2h2v1h-2zM7 2h2v1h-2zM1 3h2v1h-2zM6 3h2v1h-2zM2 4h5v1h-5zM0 7h6v1h-6zM0 8h6v1h-6zM0 9h6v1h-6zM2 10h4v1h-4zM2 11h4v1h-4zM2 12h4v1h-4zM0 13h9v1h-9zM0 14h9v1h-9zM0 15h9v1h-9z"/><path fill="#e8e4dc" d="M3 2h3v1h-3z"/></svg>
<svg class="a" style="left:649px;top:577px" width="18" height="18" viewBox="0 0 18 18"><defs><radialGradient id="mg" cx="0.350" cy="0.300" r="0.800"><stop offset="0" stop-color="#70d890"/><stop offset="0.600" stop-color="#208048"/><stop offset="1" stop-color="#103890"/></radialGradient></defs><circle cx="3.600" cy="3.800" r="1.900" fill="#3878d8"/><path d="M1 11q0-5 2.800-5q2.200 0 3 3l-2 3z" fill="#d8e8f8"/><path d="M1 11q0.500-3 2-4" stroke="#58a0e8" stroke-width="1" fill="none"/><circle cx="9.800" cy="4.500" r="3.300" fill="url(#mg)"/><path d="M3.500 16.500q0.500-8.500 6.500-8.500q5.500 0 6.500 7l-6 1.500z" fill="#48a860"/><path d="M3.500 16.500q1.500-6 4-7.500q-1 4-0.500 7.500z" fill="#2860b0"/><circle cx="12.500" cy="13.300" r="4" fill="#e82018"/><path d="M10.700 11.500l3.600 3.600M14.300 11.500l-3.600 3.600" stroke="#fff" stroke-width="1.500"/></svg>
<svg class="a" style="left:667px;top:577px" width="16" height="18" viewBox="0 0 16 18"><defs><linearGradient id="cdg" x1="0" y1="0" x2="1" y2="0"><stop offset="0" stop-color="#4888a8"/><stop offset="0.500" stop-color="#98c8e0"/><stop offset="1" stop-color="#4080a8"/></linearGradient></defs><circle cx="8" cy="9" r="7.300" fill="#eef2fc"/><path d="M8 9L3 3.700A7.300 7.300 0 0 1 13 3.700z" fill="url(#cdg)"/><path d="M8 9L3 14.300A7.300 7.300 0 0 0 13 14.300z" fill="url(#cdg)"/><circle cx="8" cy="9" r="2.300" fill="#e8f0f8" stroke="#e8c848" stroke-width="1"/><circle cx="8" cy="9" r="0.900" fill="#c8d8e8"/></svg>
<svg class="a" style="left:685px;top:577px" width="16" height="17" viewBox="0 0 16 17"><circle cx="7.800" cy="8.400" r="6.700" fill="#c8c8d0" stroke="#9c9ca4" stroke-width="1.500"/><path d="M4.500 9.500v-2.500l-1.200 1.200M4.500 7l1.300 1.200M4.500 7.500q0.500-2.500 3.300-2.500M11 7.300v2.500l1.200-1.200M11 9.800l-1.300-1.200M11 9.300q-0.500 2.500-3.300 2.500" stroke="#8a8a92" stroke-width="1.100" fill="none"/></svg>
<svg class="a" style="left:702px;top:577px" width="18" height="18" viewBox="0 0 18 18"><rect x="7.300" y="1.300" width="6.500" height="6.500" fill="#18206a" stroke="#5068d8" stroke-width="0.900"/><rect x="1.800" y="5.300" width="6.200" height="6" fill="#18206a" stroke="#5068d8" stroke-width="0.900"/><path d="M1 13q0-1.800 2-1.800h4q2 0 2 1.800v1.500h-8z" fill="#a8b8f4"/><ellipse cx="3.500" cy="13.800" rx="2.200" ry="1" fill="#fff"/><path d="M7 7.500l9 9M16 7.500l-9 9" stroke="#e81c1c" stroke-width="2.600" stroke-linecap="round"/></svg>
<svg class="a" style="left:720px;top:577px" width="18" height="18" viewBox="0 0 18 18"><ellipse cx="4.500" cy="6" rx="3.500" ry="3.500" fill="#2838a8"/><ellipse cx="7.500" cy="7" rx="5" ry="5.600" fill="#404040"/><ellipse cx="7.300" cy="6.800" rx="3.800" ry="4.400" fill="#989898"/><ellipse cx="6.800" cy="6.300" rx="2" ry="2.400" fill="#585868"/><circle cx="6.200" cy="5.300" r="1" fill="#e0e0e0"/><path d="M12.500 8.500q0.500 4-4 6M14.300 9q0.300 5-5 7.300M16 9.500q0 6-6 8.500" stroke="#8898f4" stroke-width="0.900" fill="none"/></svg>
<svg class="a" style="left:739px;top:577px" width="16" height="17" viewBox="0 0 16 17"><path d="M3.500 9.500l6-3l5 2.500l-6.500 3.500z" fill="#a8b0c4"/><path d="M3.500 9.500l4.500 3v1.800l-4.500-3z" fill="#687088"/><path d="M8 12.500l6.500-3.500v1.800l-6.500 3.500z" fill="#8890a8"/><path d="M6.500 9.300l3-1.500l2 1l-3 1.600z" fill="#303848"/><path d="M2 1l2.300 2.300q2-1.500 4.500-0.500l2 -0.800l-1.200 2.800l-0.300 2.500l-2.300-1.300q-1.500-0.500-2.500 0.800v2.500l-1.300-1.300q-1.700-2.500-0.400-4.700z" fill="#28c028" stroke="#108010" stroke-width="0.500"/></svg>
</body></html>
